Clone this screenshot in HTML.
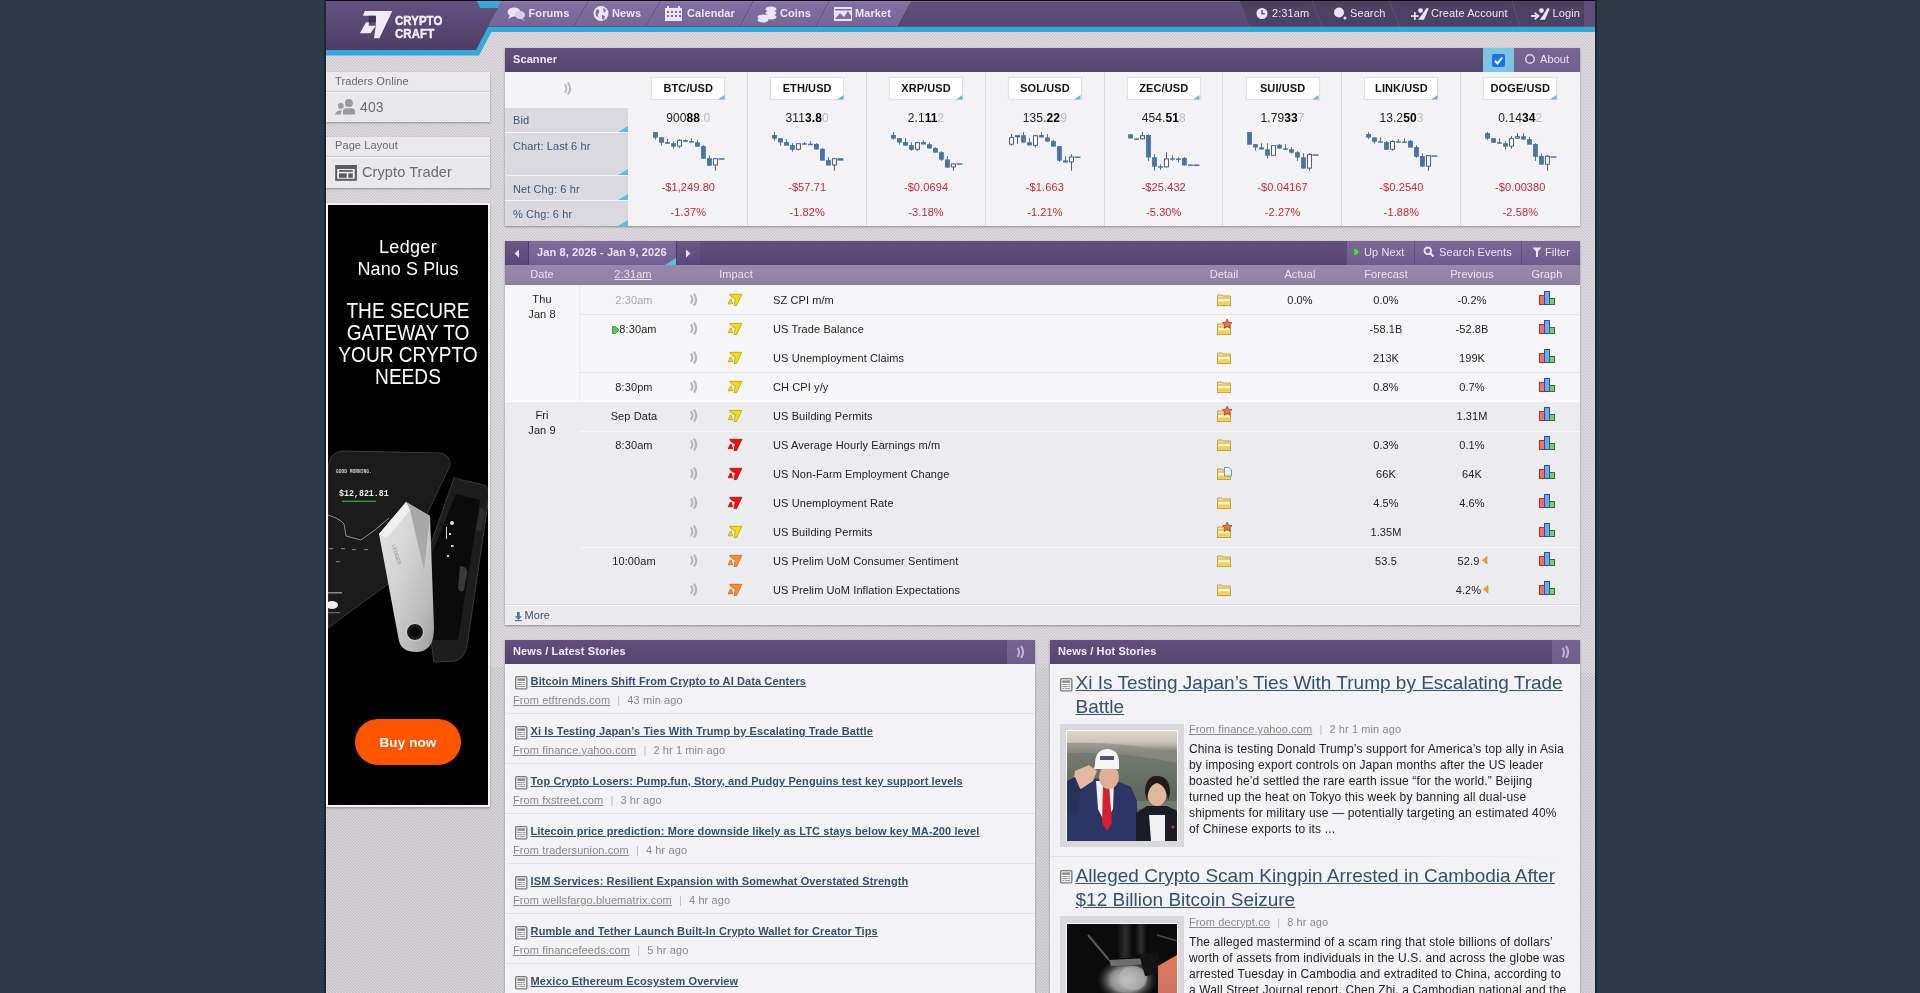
<!DOCTYPE html><html><head><meta charset="utf-8"><title>Crypto Craft</title><style>
html,body{margin:0;padding:0;}
body{width:1920px;height:993px;overflow:hidden;position:relative;background:#2d3849;font-family:'Liberation Sans',sans-serif;}
.t{position:absolute;white-space:nowrap;line-height:normal;letter-spacing:0.1px;font-family:'Liberation Sans',sans-serif;}
.b{position:absolute;}
svg{position:absolute;overflow:visible;}
.hatch{background-color:#d8d6da;background-image:repeating-linear-gradient(45deg,#c6c4c8 0px,#c6c4c8 0.71px,#dddbe0 0.71px,#dddbe0 2.1213px);}
u{text-decoration:underline;}
</style></head><body><div style="position:absolute;left:0;top:0;width:1920px;height:993px;will-change:transform;">

<div class="b" style="left:326px;top:0px;width:1269px;height:993px;background-color:#d8d6da;"></div><div class="b hatch" style="left:326px;top:0;width:1269px;height:993px;"></div>
<div class="b" style="left:324px;top:0px;width:2px;height:993px;background:#1f2633;"></div>
<div class="b" style="left:1595px;top:0px;width:2px;height:993px;background:#1f2633;"></div>
<svg style="left:0;top:0" width="1920" height="60" viewBox="0 0 1920 60">
<defs>
<linearGradient id="gLogo" x1="0" y1="0" x2="0" y2="1"><stop offset="0" stop-color="#64527f"/><stop offset="1" stop-color="#4d3d66"/></linearGradient>
<linearGradient id="gNav" x1="0" y1="0" x2="0" y2="1"><stop offset="0" stop-color="#8270a3"/><stop offset="1" stop-color="#776596"/></linearGradient>
<linearGradient id="gNavD" x1="0" y1="0" x2="0" y2="1"><stop offset="0" stop-color="#614f7c"/><stop offset="1" stop-color="#594873"/></linearGradient>
</defs>
<rect x="326" y="0" width="1269" height="1.2" fill="#08080f"/>
<polygon points="326,1 508,1 479,55.5 326,55.5" fill="#35a9d8"/>
<rect x="480" y="26" width="1115" height="6" fill="#37a8d6"/>
<polygon points="501,1 910.5,1 897,26 489,26" fill="url(#gNav)"/>
<polygon points="910.5,1 1595,1 1595,26 897,26" fill="url(#gNavD)"/>
<rect x="486" y="26" width="1109" height="1" fill="#3e5585" opacity="0.8"/>
<rect x="326" y="1" width="1269" height="1" fill="#ffffff" opacity="0.12"/>
<polygon points="326,1 477,1 480,8 498,8 476,50 326,50" fill="url(#gLogo)"/>
<g stroke="#5e4d7c" stroke-width="1">
<line x1="588.5" y1="1" x2="574.5" y2="26"/><line x1="660.5" y1="1" x2="646.5" y2="26"/>
<line x1="753.5" y1="1" x2="740.5" y2="26"/><line x1="829.5" y1="1" x2="816.5" y2="26"/>
</g>
<g stroke="#8f7eae" stroke-width="1" opacity="0.6">
<line x1="589.5" y1="1" x2="575.5" y2="26"/><line x1="661.5" y1="1" x2="647.5" y2="26"/>
<line x1="754.5" y1="1" x2="741.5" y2="26"/><line x1="830.5" y1="1" x2="817.5" y2="26"/>
</g>
<polygon points="1240,1 1595,1 1595,26 1250,26" fill="#4c4063"/>
<g stroke="#5d5078" stroke-width="1.2" opacity="0.9">
<line x1="1312" y1="1" x2="1322" y2="26"/><line x1="1389" y1="1" x2="1400" y2="26"/><line x1="1512" y1="1" x2="1520" y2="26"/>
</g>
<rect x="1584" y="1" width="11" height="25" fill="#5e4f7a"/>
<!-- logo mark -->
<g fill="#efeaf5">
<polygon points="364.8,10.9 392.3,10.9 379.4,38.3 374,38.3 375.8,25.7 375.8,15.8 363,15.8"/>
<polygon points="366,22.2 368.8,22.2 368.8,25.7 375.8,25.7 370.5,33.2 359.9,33.2"/>
</g>
<g fill="#3d3156"><rect x="368.8" y="15.8" width="7" height="6.4"/></g>
</svg>
<div class="t" style="left:367px;top:25.00px;font-size:0px;"></div>
<div class="t" style="left:394.5px;top:13.36px;font-size:13.5px;font-weight:bold;color:#f3eff8;-webkit-text-stroke:0.45px #f3eff8;transform:scaleX(0.845);transform-origin:left;">CRYPTO</div>
<div class="t" style="left:394.5px;top:25.76px;font-size:13.5px;font-weight:bold;color:#f3eff8;-webkit-text-stroke:0.45px #f3eff8;transform:scaleX(0.85);transform-origin:left;">CRAFT</div>
<div class="t" style="left:528.5px;top:6.86px;font-size:11px;font-weight:bold;color:#ece4f6;">Forums</div>
<div class="t" style="left:612px;top:6.86px;font-size:11px;font-weight:bold;color:#ece4f6;">News</div>
<div class="t" style="left:687px;top:6.86px;font-size:11px;font-weight:bold;color:#ece4f6;">Calendar</div>
<div class="t" style="left:780px;top:6.86px;font-size:11px;font-weight:bold;color:#ece4f6;">Coins</div>
<div class="t" style="left:855px;top:6.86px;font-size:11px;font-weight:bold;color:#ece4f6;">Market</div>
<div class="t" style="left:1272px;top:6.86px;font-size:11px;color:#ece4f6;">2:31am</div>
<div class="t" style="left:1350px;top:6.86px;font-size:11px;color:#ece4f6;">Search</div>
<div class="t" style="left:1431px;top:6.86px;font-size:11px;color:#ece4f6;">Create Account</div>
<div class="t" style="left:1552.5px;top:6.86px;font-size:11px;color:#ece4f6;">Login</div>
<svg style="left:0;top:0" width="1920" height="30">
<g fill="#ece4f6">
<ellipse cx="514" cy="12" rx="6.5" ry="4.5"/><polygon points="510,15 508,19 514,16"/>
<ellipse cx="520" cy="15" rx="5" ry="4" fill="#d9cfe6"/><polygon points="522,18 525,21 519,18" fill="#d9cfe6"/>
<circle cx="601" cy="13.5" r="7.5"/>
<rect x="665" y="8" width="17" height="13"/><rect x="667" y="6" width="2" height="3"/><rect x="678" y="6" width="2" height="3"/>
<ellipse cx="763" cy="17" rx="5.5" ry="2.6"/><ellipse cx="763" cy="20" rx="5.5" ry="2.6"/><ellipse cx="771" cy="9" rx="5.5" ry="2.6"/><ellipse cx="771" cy="13" rx="5.5" ry="2.6"/><ellipse cx="771" cy="17" rx="5.5" ry="2.6"/>
<rect x="834" y="7" width="18" height="14"/>
<circle cx="1262" cy="13.5" r="5.5"/>
<circle cx="1339" cy="12.5" r="5"/><circle cx="1345" cy="18" r="1.5"/>
<polygon points="1426.5,8 1428.8,8.6 1424,19.8 1418,19.8 1422.3,14.3"/><circle cx="1420.5" cy="10.6" r="2.4"/><rect x="1411" y="15.2" width="7.6" height="1.7"/><rect x="1414" y="12.2" width="1.7" height="7.6"/>
<polygon points="1547.5,8 1549.6,8.8 1545,19.8 1539.8,19.8 1543.6,14.5"/><circle cx="1541.4" cy="10.6" r="2.4"/><rect x="1531" y="15" width="6" height="1.9"/><polygon points="1535.3,12 1539.7,16 1535.3,19.9 1534,18.5 1536.8,16 1534,13.4"/>
</g>
<g fill="#7f6d9f">
<path d="M597 9 q3 1 2 4 q-2 1 -1 4 l-2 -1 q-1 -3 0 -5z M603 8 q2 0 3 3 l-2 2 z M602 15 l3 1 -1 4 -2 -1z"/>
<rect x="667" y="11" width="2" height="2"/><rect x="671" y="11" width="2" height="2"/><rect x="675" y="11" width="2" height="2"/><rect x="679" y="11" width="2" height="2"/>
<rect x="667" y="15" width="2" height="2"/><rect x="671" y="15" width="2" height="2"/><rect x="675" y="15" width="2" height="2"/><rect x="679" y="15" width="2" height="2"/>
<polygon points="835,19 840,13 844,17 848,11 851,16 851,19"/><rect x="835" y="9" width="16" height="1.5"/>
</g>
<g fill="#56466f"><rect x="1261.3" y="10" width="1.4" height="4"/><rect x="1261.3" y="13" width="3.5" height="1.4"/></g>
</svg>
<div class="b" style="left:326px;top:72px;width:164px;height:50px;background:#e9e8eb;box-shadow:0 1px 2px rgba(0,0,0,0.35);"></div><div class="b" style="left:326px;top:72px;width:164px;height:19px;background:#eae9ec;"></div><div class="b" style="left:326px;top:91px;width:164px;height:1px;background:#cfcdd2;"></div><div class="b" style="left:326px;top:92px;width:164px;height:1px;background:#f6f6f8;"></div>
<div class="t" style="left:335px;top:74.86px;font-size:11px;color:#6b6b6b;">Traders Online</div>
<div class="t" style="left:360px;top:98.60px;font-size:14px;color:#6b6b6b;">403</div>
<svg style="left:0;top:0" width="600" height="200"><g fill="#9a9a9c">
<circle cx="348.9" cy="102.9" r="3.9"/><path d="M343 114.6 v-2.8 q0 -3.6 3.6 -3.6 h4.8 q3.6 0 3.6 3.6 v2.8z"/>
<circle cx="340.9" cy="105.9" r="2.9"/><path d="M335 114.6 q1.2 -4.4 6.8 -4.4 l-1 4.4z"/>
</g></svg>
<div class="b" style="left:326px;top:137px;width:164px;height:51px;background:#e9e8eb;box-shadow:0 1px 2px rgba(0,0,0,0.35);"></div><div class="b" style="left:326px;top:137px;width:164px;height:19px;background:#eae9ec;"></div><div class="b" style="left:326px;top:156px;width:164px;height:1px;background:#cfcdd2;"></div><div class="b" style="left:326px;top:157px;width:164px;height:1px;background:#f6f6f8;"></div>
<div class="t" style="left:335px;top:139.36px;font-size:11px;color:#6b6b6b;">Page Layout</div>
<div class="t" style="left:362px;top:164.34px;font-size:14.5px;color:#6b6b6b;">Crypto Trader</div>
<svg style="left:0;top:0" width="400" height="200"><rect x="335.2" y="165" width="21.7" height="15.8" fill="#5c5c5e"/><rect x="337.2" y="169" width="17.5" height="9.75" fill="#f2f2f4"/><rect x="339" y="170" width="13.8" height="1.8" fill="#5c5c5e"/><rect x="339" y="173.3" width="7.7" height="4.5" fill="#5c5c5e"/><rect x="348.3" y="173.3" width="4.5" height="4.5" fill="#5c5c5e"/></svg>
<div class="b" style="left:326px;top:203px;width:164px;height:604px;background:#f4f4f4;box-shadow:0 1px 2px rgba(0,0,0,0.3);"></div>
<div class="b" style="left:328px;top:205px;width:160px;height:600px;background:#000;overflow:hidden;"></div>
<div class="t" style="left:258.0px;width:300px;text-align:center;top:237.41px;font-size:18px;color:#fff;letter-spacing:0.35px;">Ledger</div>
<div class="t" style="left:258.0px;width:300px;text-align:center;top:259.41px;font-size:18px;color:#fff;">Nano S Plus</div>
<div class="t" style="left:258.0px;width:300px;text-align:center;top:297.53px;font-size:22px;color:#fff;letter-spacing:0;transform:scaleX(0.868);">THE SECURE</div>
<div class="t" style="left:258.0px;width:300px;text-align:center;top:319.53px;font-size:22px;color:#fff;letter-spacing:0;transform:scaleX(0.868);">GATEWAY TO</div>
<div class="t" style="left:258.0px;width:300px;text-align:center;top:341.53px;font-size:22px;color:#fff;letter-spacing:0;transform:scaleX(0.868);">YOUR CRYPTO</div>
<div class="t" style="left:258.0px;width:300px;text-align:center;top:363.53px;font-size:22px;color:#fff;letter-spacing:0;transform:scaleX(0.868);">NEEDS</div>
<svg style="left:0;top:0" width="600" height="993">
<defs>
<linearGradient id="gSilver" x1="0" y1="0" x2="1" y2="1"><stop offset="0" stop-color="#e8e8e8"/><stop offset="0.45" stop-color="#d2d2d2"/><stop offset="0.8" stop-color="#b8b8b8"/><stop offset="1" stop-color="#9a9a9a"/></linearGradient>
<linearGradient id="gPhone" x1="0" y1="0" x2="1" y2="0"><stop offset="0" stop-color="#1e1e1e"/><stop offset="1" stop-color="#2e2e2e"/></linearGradient>
<clipPath id="adclip"><rect x="328" y="205" width="160" height="600"/></clipPath>
</defs>
<g clip-path="url(#adclip)">
<path d="M328 470 Q329 452 342 451 L440 453 Q451 455 450 466 L396 578 L328 628 z" fill="#1b1b1b" stroke="#3a3a3a" stroke-width="1"/>
<text x="336" y="473" font-size="4.6" fill="#cfcfcf" font-family="Liberation Mono" font-weight="bold">GOOD MORNING.</text>
<text x="339" y="496" font-size="8.3" fill="#ececec" font-family="Liberation Mono" font-weight="bold">$12,821.81</text>
<rect x="342" y="500.5" width="34" height="1.6" fill="#3c8a3c"/>
<polyline points="328,515 336,518 341,521 344,524 346,536 361,540 375,530 389,518" stroke="#bdbdbd" stroke-width="0.7" fill="none"/>
<g fill="#777"><rect x="329" y="548" width="4" height="1.2"/><rect x="341" y="548" width="4" height="1.2"/><rect x="352" y="549" width="4" height="1.2"/><rect x="364" y="549" width="4" height="1.2"/><rect x="336" y="561" width="4" height="1.2"/></g>
<rect x="328" y="592" width="14" height="1.5" fill="#888"/>
<ellipse cx="332" cy="605" rx="6" ry="4" fill="#eee"/>
<rect x="328" y="612" width="12" height="1.2" fill="#666"/>
<path d="M454 478 L484 485 Q490 488 489 496 L467 646 Q465 658 455 661 L434 662 L421 572 z" fill="#1d1d1d" stroke="#3b3b3b" stroke-width="1"/>
<path d="M456 494 L480 500 L458 640 L432 640 L424 574z" fill="#0b0b0b"/>
<g fill="#ddd"><circle cx="452" cy="523" r="2"/><rect x="446" y="527" width="1" height="12"/><rect x="449" y="533" width="2" height="2"/><rect x="451" y="545" width="2.5" height="2"/><rect x="447" y="555" width="2" height="2"/></g>
<path d="M480 508 Q486 508 485 516 L482 530 Q478 534 476 528 z" fill="#2c2c2c"/>
<path d="M460 566 Q468 566 467 574 L464 590 Q460 594 458 588 z" fill="#3a3a3a"/>
<path d="M406 502 L430 516 L434 628 Q434 652 416 652 Q402 652 399 641 L379 534 z" fill="url(#gSilver)"/>
<path d="M406 502 L430 516 L424 570 L410 510z" fill="#a8a8a8"/>
<path d="M379 534 L406 502 L410 510 L387 538z" fill="#f0f0f0"/>
<circle cx="415" cy="632" r="8.5" fill="#1a1a1a" stroke="#d8d8d8" stroke-width="1"/>
<circle cx="415" cy="632" r="5" fill="#000"/>
<text x="392" y="545" font-size="5" fill="#888" font-family="Liberation Sans" transform="rotate(74 392 545)">LEDGER</text>
</g>
</svg>
<div class="b" style="left:355px;top:719px;width:106px;height:45.5px;background:#ff5400;border-radius:23px;"></div>
<div class="t" style="left:258.0px;width:300px;text-align:center;top:734.56px;font-size:13.5px;color:#fff;font-weight:bold;">Buy now</div>
<div class="b" style="left:505px;top:48px;width:1075px;height:178px;background:#f3f3f6;box-shadow:0 1px 2px rgba(0,0,0,0.35);"></div>
<div class="b" style="left:505px;top:48px;width:1075px;height:24px;background:linear-gradient(#634f7e,#55446e);"></div>
<div class="t" style="left:513px;top:52.86px;font-size:11px;font-weight:bold;color:#f2ecf9;">Scanner</div>
<div class="b" style="left:1483px;top:48px;width:31px;height:24px;background:#7fc5e2;"></div>
<div class="b" style="left:1492px;top:54px;width:13px;height:13px;background:#1a73e8;border-radius:2px;"></div>
<svg style="left:1492px;top:54px" width="13" height="13"><polyline points="3,6.8 5.5,9.5 10.2,3.5" fill="none" stroke="#fff" stroke-width="2"/></svg>
<div class="b" style="left:1514px;top:48px;width:66px;height:24px;background:linear-gradient(#776693,#715f8d);"></div>
<svg style="left:1524px;top:53px" width="14" height="14"><circle cx="6" cy="6" r="4.3" fill="none" stroke="#d8cde6" stroke-width="1.6"/><circle cx="6" cy="6" r="2.2" fill="#6f5c8c"/></svg>
<div class="t" style="left:1540px;top:52.86px;font-size:11px;color:#ece4f6;">About</div>
<div class="b" style="left:505px;top:72px;width:123px;height:36px;background:#f4f4f7;"></div>
<div class="b" style="left:505px;top:108px;width:123px;height:24px;background:#dad9df;"></div>
<div class="t" style="left:513px;top:113.96px;font-size:11px;color:#3d5a76;">Bid</div>
<svg style="left:618px;top:126px" width="10" height="6"><polygon points="10,0 10,6 0,6" fill="#5cbde2"/></svg>
<div class="b" style="left:505px;top:133px;width:123px;height:42px;background:#dad9df;"></div>
<div class="t" style="left:513px;top:139.76px;font-size:11px;color:#3d5a76;">Chart: Last 6 hr</div>
<svg style="left:618px;top:169px" width="10" height="6"><polygon points="10,0 10,6 0,6" fill="#5cbde2"/></svg>
<div class="b" style="left:505px;top:176px;width:123px;height:24px;background:#dad9df;"></div>
<div class="t" style="left:513px;top:182.76px;font-size:11px;color:#3d5a76;">Net Chg: 6 hr</div>
<svg style="left:618px;top:194px" width="10" height="6"><polygon points="10,0 10,6 0,6" fill="#5cbde2"/></svg>
<div class="b" style="left:505px;top:201px;width:123px;height:25px;background:#dad9df;"></div>
<div class="t" style="left:513px;top:207.76px;font-size:11px;color:#3d5a76;">% Chg: 6 hr</div>
<svg style="left:618px;top:220px" width="10" height="6"><polygon points="10,0 10,6 0,6" fill="#5cbde2"/></svg>
<svg style="left:562.5px;top:82px" width="14" height="14"><path d="M1.8 2.3 q3.2 4.15 0 8.3" fill="none" stroke="#bcbcc0" stroke-width="2"/><path d="M4.9 0.6 q4.4 6 0 12" fill="none" stroke="#bcbcc0" stroke-width="2.2"/></svg>
<div class="b" style="left:652.3px;top:78px;width:72px;height:21px;background:#fff;box-shadow:0 0 1px 1px rgba(0,0,0,0.08);"></div>
<svg style="left:717.8px;top:94.5px" width="6.5" height="4.5"><polygon points="6.5,0 6.5,4.5 0,4.5" fill="#66b9dc"/></svg>
<div class="t" style="left:538.3px;width:300px;text-align:center;top:81.86px;font-size:11px;font-weight:bold;color:#111;">BTC/USD</div>
<div class="t" style="left:538.3px;width:300px;text-align:center;top:111.24px;font-size:12px;"><span style="color:#222">900</span><b style="color:#000">88</b><span style="color:#bbb">.0</span></div>
<div class="t" style="left:538.3px;width:300px;text-align:center;top:181.06px;font-size:11px;color:#c42a2a;">-$1,249.80</div>
<div class="t" style="left:538.3px;width:300px;text-align:center;top:205.66px;font-size:11px;color:#c42a2a;">-1.37%</div>
<div class="b" style="left:747px;top:72px;width:1px;height:154px;background:#dcdbe0;"></div>
<div class="b" style="left:771.16px;top:78px;width:72px;height:21px;background:#fff;box-shadow:0 0 1px 1px rgba(0,0,0,0.08);"></div>
<svg style="left:836.66px;top:94.5px" width="6.5" height="4.5"><polygon points="6.5,0 6.5,4.5 0,4.5" fill="#66b9dc"/></svg>
<div class="t" style="left:657.16px;width:300px;text-align:center;top:81.86px;font-size:11px;font-weight:bold;color:#111;">ETH/USD</div>
<div class="t" style="left:657.16px;width:300px;text-align:center;top:111.24px;font-size:12px;"><span style="color:#222">311</span><b style="color:#000">3.8</b><span style="color:#bbb">0</span></div>
<div class="t" style="left:657.16px;width:300px;text-align:center;top:181.06px;font-size:11px;color:#c42a2a;">-$57.71</div>
<div class="t" style="left:657.16px;width:300px;text-align:center;top:205.66px;font-size:11px;color:#c42a2a;">-1.82%</div>
<div class="b" style="left:866px;top:72px;width:1px;height:154px;background:#dcdbe0;"></div>
<div class="b" style="left:890.02px;top:78px;width:72px;height:21px;background:#fff;box-shadow:0 0 1px 1px rgba(0,0,0,0.08);"></div>
<svg style="left:955.52px;top:94.5px" width="6.5" height="4.5"><polygon points="6.5,0 6.5,4.5 0,4.5" fill="#66b9dc"/></svg>
<div class="t" style="left:776.02px;width:300px;text-align:center;top:81.86px;font-size:11px;font-weight:bold;color:#111;">XRP/USD</div>
<div class="t" style="left:776.02px;width:300px;text-align:center;top:111.24px;font-size:12px;"><span style="color:#222">2.1</span><b style="color:#000">11</b><span style="color:#bbb">2</span></div>
<div class="t" style="left:776.02px;width:300px;text-align:center;top:181.06px;font-size:11px;color:#c42a2a;">-$0.0694</div>
<div class="t" style="left:776.02px;width:300px;text-align:center;top:205.66px;font-size:11px;color:#c42a2a;">-3.18%</div>
<div class="b" style="left:985px;top:72px;width:1px;height:154px;background:#dcdbe0;"></div>
<div class="b" style="left:1008.8799999999999px;top:78px;width:72px;height:21px;background:#fff;box-shadow:0 0 1px 1px rgba(0,0,0,0.08);"></div>
<svg style="left:1074.3799999999999px;top:94.5px" width="6.5" height="4.5"><polygon points="6.5,0 6.5,4.5 0,4.5" fill="#66b9dc"/></svg>
<div class="t" style="left:894.8799999999999px;width:300px;text-align:center;top:81.86px;font-size:11px;font-weight:bold;color:#111;">SOL/USD</div>
<div class="t" style="left:894.8799999999999px;width:300px;text-align:center;top:111.24px;font-size:12px;"><span style="color:#222">135.</span><b style="color:#000">22</b><span style="color:#bbb">9</span></div>
<div class="t" style="left:894.8799999999999px;width:300px;text-align:center;top:181.06px;font-size:11px;color:#c42a2a;">-$1.663</div>
<div class="t" style="left:894.8799999999999px;width:300px;text-align:center;top:205.66px;font-size:11px;color:#c42a2a;">-1.21%</div>
<div class="b" style="left:1104px;top:72px;width:1px;height:154px;background:#dcdbe0;"></div>
<div class="b" style="left:1127.74px;top:78px;width:72px;height:21px;background:#fff;box-shadow:0 0 1px 1px rgba(0,0,0,0.08);"></div>
<svg style="left:1193.24px;top:94.5px" width="6.5" height="4.5"><polygon points="6.5,0 6.5,4.5 0,4.5" fill="#66b9dc"/></svg>
<div class="t" style="left:1013.74px;width:300px;text-align:center;top:81.86px;font-size:11px;font-weight:bold;color:#111;">ZEC/USD</div>
<div class="t" style="left:1013.74px;width:300px;text-align:center;top:111.24px;font-size:12px;"><span style="color:#222">454.</span><b style="color:#000">51</b><span style="color:#bbb">8</span></div>
<div class="t" style="left:1013.74px;width:300px;text-align:center;top:181.06px;font-size:11px;color:#c42a2a;">-$25.432</div>
<div class="t" style="left:1013.74px;width:300px;text-align:center;top:205.66px;font-size:11px;color:#c42a2a;">-5.30%</div>
<div class="b" style="left:1222px;top:72px;width:1px;height:154px;background:#dcdbe0;"></div>
<div class="b" style="left:1246.6px;top:78px;width:72px;height:21px;background:#fff;box-shadow:0 0 1px 1px rgba(0,0,0,0.08);"></div>
<svg style="left:1312.1px;top:94.5px" width="6.5" height="4.5"><polygon points="6.5,0 6.5,4.5 0,4.5" fill="#66b9dc"/></svg>
<div class="t" style="left:1132.6px;width:300px;text-align:center;top:81.86px;font-size:11px;font-weight:bold;color:#111;">SUI/USD</div>
<div class="t" style="left:1132.6px;width:300px;text-align:center;top:111.24px;font-size:12px;"><span style="color:#222">1.79</span><b style="color:#000">33</b><span style="color:#bbb">7</span></div>
<div class="t" style="left:1132.6px;width:300px;text-align:center;top:181.06px;font-size:11px;color:#c42a2a;">-$0.04167</div>
<div class="t" style="left:1132.6px;width:300px;text-align:center;top:205.66px;font-size:11px;color:#c42a2a;">-2.27%</div>
<div class="b" style="left:1341px;top:72px;width:1px;height:154px;background:#dcdbe0;"></div>
<div class="b" style="left:1365.46px;top:78px;width:72px;height:21px;background:#fff;box-shadow:0 0 1px 1px rgba(0,0,0,0.08);"></div>
<svg style="left:1430.96px;top:94.5px" width="6.5" height="4.5"><polygon points="6.5,0 6.5,4.5 0,4.5" fill="#66b9dc"/></svg>
<div class="t" style="left:1251.46px;width:300px;text-align:center;top:81.86px;font-size:11px;font-weight:bold;color:#111;">LINK/USD</div>
<div class="t" style="left:1251.46px;width:300px;text-align:center;top:111.24px;font-size:12px;"><span style="color:#222">13.2</span><b style="color:#000">50</b><span style="color:#bbb">3</span></div>
<div class="t" style="left:1251.46px;width:300px;text-align:center;top:181.06px;font-size:11px;color:#c42a2a;">-$0.2540</div>
<div class="t" style="left:1251.46px;width:300px;text-align:center;top:205.66px;font-size:11px;color:#c42a2a;">-1.88%</div>
<div class="b" style="left:1460px;top:72px;width:1px;height:154px;background:#dcdbe0;"></div>
<div class="b" style="left:1484.32px;top:78px;width:72px;height:21px;background:#fff;box-shadow:0 0 1px 1px rgba(0,0,0,0.08);"></div>
<svg style="left:1549.82px;top:94.5px" width="6.5" height="4.5"><polygon points="6.5,0 6.5,4.5 0,4.5" fill="#66b9dc"/></svg>
<div class="t" style="left:1370.32px;width:300px;text-align:center;top:81.86px;font-size:11px;font-weight:bold;color:#111;">DOGE/USD</div>
<div class="t" style="left:1370.32px;width:300px;text-align:center;top:111.24px;font-size:12px;"><span style="color:#222">0.14</span><b style="color:#000">34</b><span style="color:#bbb">2</span></div>
<div class="t" style="left:1370.32px;width:300px;text-align:center;top:181.06px;font-size:11px;color:#c42a2a;">-$0.00380</div>
<div class="t" style="left:1370.32px;width:300px;text-align:center;top:205.66px;font-size:11px;color:#c42a2a;">-2.58%</div>
<svg style="left:0;top:0" width="1920" height="200"><line x1="655.49" y1="132.11" x2="655.49" y2="139.60" stroke="#4873a6" stroke-width="1"/><rect x="653.09" y="132.11" width="4.8" height="5.56" fill="#4873a6"/><line x1="661.48" y1="137.18" x2="661.48" y2="145.64" stroke="#4873a6" stroke-width="1"/><rect x="659.08" y="137.18" width="4.8" height="5.56" fill="#4873a6"/><line x1="667.48" y1="139.12" x2="667.48" y2="143.71" stroke="#4873a6" stroke-width="1"/><rect x="665.08" y="142.02" width="4.8" height="1.69" fill="#4873a6"/><line x1="673.47" y1="141.29" x2="673.47" y2="148.78" stroke="#4873a6" stroke-width="1"/><rect x="671.07" y="143.22" width="4.8" height="3.38" fill="#4873a6"/><line x1="679.46" y1="139.12" x2="679.46" y2="147.82" stroke="#4a5a80" stroke-width="1"/><rect x="677.46" y="140.34" width="4" height="5.77" fill="#fff" stroke="#4a5a80" stroke-width="1"/><line x1="685.46" y1="139.12" x2="685.46" y2="141.77" stroke="#4873a6" stroke-width="1"/><rect x="683.06" y="140.08" width="4.8" height="1.69" fill="#4873a6"/><line x1="691.45" y1="138.15" x2="691.45" y2="142.50" stroke="#4873a6" stroke-width="1"/><rect x="689.05" y="141.05" width="4.8" height="1.50" fill="#4873a6"/><line x1="697.44" y1="140.08" x2="697.44" y2="146.61" stroke="#4873a6" stroke-width="1"/><rect x="695.04" y="142.26" width="4.8" height="4.35" fill="#4873a6"/><line x1="703.44" y1="145.16" x2="703.44" y2="158.69" stroke="#4873a6" stroke-width="1"/><rect x="701.04" y="146.12" width="4.8" height="12.57" fill="#4873a6"/><line x1="709.43" y1="155.31" x2="709.43" y2="165.70" stroke="#4873a6" stroke-width="1"/><rect x="707.03" y="158.21" width="4.8" height="7.49" fill="#4873a6"/><line x1="715.42" y1="158.21" x2="715.42" y2="170.77" stroke="#4a5a80" stroke-width="1"/><rect x="713.42" y="158.71" width="4" height="6.25" fill="#fff" stroke="#4a5a80" stroke-width="1"/><rect x="718.42" y="158.21" width="6" height="1.50" fill="#4873a6"/></svg>
<svg style="left:0;top:0" width="1920" height="200"><line x1="774.49" y1="132.11" x2="774.49" y2="140.81" stroke="#4873a6" stroke-width="1"/><rect x="772.09" y="135.01" width="4.8" height="3.62" fill="#4873a6"/><line x1="780.48" y1="138.15" x2="780.48" y2="145.64" stroke="#4873a6" stroke-width="1"/><rect x="778.08" y="138.15" width="4.8" height="4.35" fill="#4873a6"/><line x1="786.48" y1="139.12" x2="786.48" y2="145.64" stroke="#4873a6" stroke-width="1"/><rect x="784.08" y="142.02" width="4.8" height="3.62" fill="#4873a6"/><line x1="792.47" y1="143.22" x2="792.47" y2="151.68" stroke="#4873a6" stroke-width="1"/><rect x="790.07" y="145.16" width="4.8" height="4.59" fill="#4873a6"/><line x1="798.46" y1="143.22" x2="798.46" y2="150.47" stroke="#4a5a80" stroke-width="1"/><rect x="796.46" y="143.72" width="4" height="5.52" fill="#fff" stroke="#4a5a80" stroke-width="1"/><line x1="804.46" y1="142.02" x2="804.46" y2="144.67" stroke="#4873a6" stroke-width="1"/><rect x="802.06" y="143.22" width="4.8" height="1.50" fill="#4873a6"/><line x1="810.45" y1="141.05" x2="810.45" y2="144.67" stroke="#4873a6" stroke-width="1"/><rect x="808.05" y="143.71" width="4.8" height="1.50" fill="#4873a6"/><line x1="816.44" y1="143.22" x2="816.44" y2="149.51" stroke="#4873a6" stroke-width="1"/><rect x="814.04" y="143.95" width="4.8" height="5.56" fill="#4873a6"/><line x1="822.44" y1="148.06" x2="822.44" y2="160.62" stroke="#4873a6" stroke-width="1"/><rect x="820.04" y="148.78" width="4.8" height="11.84" fill="#4873a6"/><line x1="828.43" y1="157.00" x2="828.43" y2="165.46" stroke="#4873a6" stroke-width="1"/><rect x="826.03" y="160.14" width="4.8" height="5.32" fill="#4873a6"/><line x1="834.42" y1="158.21" x2="834.42" y2="170.77" stroke="#4a5a80" stroke-width="1"/><rect x="832.42" y="158.71" width="4" height="6.25" fill="#fff" stroke="#4a5a80" stroke-width="1"/><rect x="837.42" y="158.21" width="6" height="2.42" fill="#4873a6"/></svg>
<svg style="left:0;top:0" width="1920" height="200"><line x1="893.49" y1="132.11" x2="893.49" y2="139.60" stroke="#4873a6" stroke-width="1"/><rect x="891.09" y="135.01" width="4.8" height="3.62" fill="#4873a6"/><line x1="899.48" y1="138.15" x2="899.48" y2="144.67" stroke="#4873a6" stroke-width="1"/><rect x="897.08" y="138.15" width="4.8" height="4.35" fill="#4873a6"/><line x1="905.48" y1="138.15" x2="905.48" y2="145.64" stroke="#4873a6" stroke-width="1"/><rect x="903.08" y="142.02" width="4.8" height="3.62" fill="#4873a6"/><line x1="911.47" y1="142.26" x2="911.47" y2="150.72" stroke="#4873a6" stroke-width="1"/><rect x="909.07" y="145.16" width="4.8" height="4.59" fill="#4873a6"/><line x1="917.46" y1="142.26" x2="917.46" y2="150.72" stroke="#4a5a80" stroke-width="1"/><rect x="915.46" y="142.76" width="4" height="6.49" fill="#fff" stroke="#4a5a80" stroke-width="1"/><line x1="923.46" y1="140.08" x2="923.46" y2="144.43" stroke="#4873a6" stroke-width="1"/><rect x="921.06" y="142.02" width="4.8" height="2.42" fill="#4873a6"/><line x1="929.45" y1="142.26" x2="929.45" y2="148.54" stroke="#4873a6" stroke-width="1"/><rect x="927.05" y="144.19" width="4.8" height="4.35" fill="#4873a6"/><line x1="935.44" y1="147.33" x2="935.44" y2="152.65" stroke="#4873a6" stroke-width="1"/><rect x="933.04" y="148.06" width="4.8" height="4.59" fill="#4873a6"/><line x1="941.44" y1="151.20" x2="941.44" y2="160.87" stroke="#4873a6" stroke-width="1"/><rect x="939.04" y="152.17" width="4.8" height="7.49" fill="#4873a6"/><line x1="947.43" y1="156.27" x2="947.43" y2="167.63" stroke="#4873a6" stroke-width="1"/><rect x="945.03" y="159.42" width="4.8" height="8.22" fill="#4873a6"/><line x1="953.42" y1="163.52" x2="953.42" y2="170.77" stroke="#4a5a80" stroke-width="1"/><rect x="951.42" y="164.02" width="4" height="2.87" fill="#fff" stroke="#4a5a80" stroke-width="1"/><rect x="956.42" y="163.28" width="6" height="1.50" fill="#4873a6"/></svg>
<svg style="left:0;top:0" width="1920" height="200"><line x1="1011.52" y1="134.04" x2="1011.52" y2="145.64" stroke="#4a5a80" stroke-width="1"/><rect x="1009.52" y="137.68" width="4" height="6.49" fill="#fff" stroke="#4a5a80" stroke-width="1"/><line x1="1017.52" y1="135.25" x2="1017.52" y2="143.71" stroke="#4a5a80" stroke-width="1"/><rect x="1015.52" y="135.75" width="4" height="0.93" fill="#fff" stroke="#4a5a80" stroke-width="1"/><line x1="1023.51" y1="132.11" x2="1023.51" y2="142.50" stroke="#4873a6" stroke-width="1"/><rect x="1021.11" y="135.25" width="4.8" height="7.25" fill="#4873a6"/><line x1="1029.50" y1="138.15" x2="1029.50" y2="145.40" stroke="#4873a6" stroke-width="1"/><rect x="1027.10" y="142.26" width="4.8" height="3.14" fill="#4873a6"/><line x1="1035.50" y1="135.25" x2="1035.50" y2="147.57" stroke="#4a5a80" stroke-width="1"/><rect x="1033.50" y="135.75" width="4" height="9.63" fill="#fff" stroke="#4a5a80" stroke-width="1"/><line x1="1041.49" y1="132.11" x2="1041.49" y2="137.42" stroke="#4873a6" stroke-width="1"/><rect x="1039.09" y="135.01" width="4.8" height="2.42" fill="#4873a6"/><line x1="1047.48" y1="134.04" x2="1047.48" y2="141.53" stroke="#4873a6" stroke-width="1"/><rect x="1045.08" y="137.42" width="4.8" height="4.11" fill="#4873a6"/><line x1="1053.48" y1="140.08" x2="1053.48" y2="146.61" stroke="#4873a6" stroke-width="1"/><rect x="1051.08" y="141.05" width="4.8" height="5.56" fill="#4873a6"/><line x1="1059.47" y1="146.12" x2="1059.47" y2="161.83" stroke="#4873a6" stroke-width="1"/><rect x="1057.07" y="146.12" width="4.8" height="14.50" fill="#4873a6"/><line x1="1065.46" y1="156.27" x2="1065.46" y2="162.56" stroke="#4873a6" stroke-width="1"/><rect x="1063.06" y="160.38" width="4.8" height="2.17" fill="#4873a6"/><line x1="1071.46" y1="154.10" x2="1071.46" y2="170.77" stroke="#4a5a80" stroke-width="1"/><rect x="1069.46" y="157.02" width="4" height="4.80" fill="#fff" stroke="#4a5a80" stroke-width="1"/><rect x="1074.45" y="156.52" width="6" height="1.50" fill="#4873a6"/></svg>
<svg style="left:0;top:0" width="1920" height="200"><line x1="1130.52" y1="134.28" x2="1130.52" y2="138.39" stroke="#4873a6" stroke-width="1"/><rect x="1128.12" y="134.28" width="4.8" height="4.11" fill="#4873a6"/><line x1="1136.52" y1="138.39" x2="1136.52" y2="139.60" stroke="#4873a6" stroke-width="1"/><rect x="1134.12" y="138.39" width="4.8" height="1.50" fill="#4873a6"/><line x1="1142.51" y1="132.11" x2="1142.51" y2="139.36" stroke="#4a5a80" stroke-width="1"/><rect x="1140.51" y="135.75" width="4" height="3.11" fill="#fff" stroke="#4a5a80" stroke-width="1"/><line x1="1148.50" y1="134.28" x2="1148.50" y2="160.87" stroke="#4873a6" stroke-width="1"/><rect x="1146.10" y="135.01" width="4.8" height="22.47" fill="#4873a6"/><line x1="1154.50" y1="154.34" x2="1154.50" y2="170.77" stroke="#4873a6" stroke-width="1"/><rect x="1152.10" y="157.24" width="4.8" height="9.42" fill="#4873a6"/><line x1="1160.49" y1="164.25" x2="1160.49" y2="169.81" stroke="#4873a6" stroke-width="1"/><rect x="1158.09" y="166.18" width="4.8" height="1.50" fill="#4873a6"/><line x1="1166.48" y1="152.17" x2="1166.48" y2="167.39" stroke="#4a5a80" stroke-width="1"/><rect x="1164.48" y="158.95" width="4" height="7.94" fill="#fff" stroke="#4a5a80" stroke-width="1"/><line x1="1172.48" y1="155.31" x2="1172.48" y2="160.87" stroke="#4873a6" stroke-width="1"/><rect x="1170.08" y="158.21" width="4.8" height="1.50" fill="#4873a6"/><line x1="1178.47" y1="157.24" x2="1178.47" y2="162.56" stroke="#4873a6" stroke-width="1"/><rect x="1176.07" y="158.45" width="4.8" height="1.50" fill="#4873a6"/><line x1="1184.46" y1="157.00" x2="1184.46" y2="165.46" stroke="#4873a6" stroke-width="1"/><rect x="1182.06" y="157.97" width="4.8" height="7.49" fill="#4873a6"/><line x1="1190.46" y1="164.49" x2="1190.46" y2="165.70" stroke="#4873a6" stroke-width="1"/><rect x="1188.06" y="164.49" width="4.8" height="1.50" fill="#4873a6"/><rect x="1193.45" y="164.49" width="6" height="1.50" fill="#4873a6"/></svg>
<svg style="left:0;top:0" width="1920" height="200"><line x1="1249.52" y1="132.11" x2="1249.52" y2="144.67" stroke="#4873a6" stroke-width="1"/><rect x="1247.12" y="132.11" width="4.8" height="12.57" fill="#4873a6"/><line x1="1255.52" y1="144.19" x2="1255.52" y2="150.72" stroke="#4873a6" stroke-width="1"/><rect x="1253.12" y="144.19" width="4.8" height="3.38" fill="#4873a6"/><line x1="1261.51" y1="143.22" x2="1261.51" y2="149.51" stroke="#4873a6" stroke-width="1"/><rect x="1259.11" y="147.33" width="4.8" height="2.17" fill="#4873a6"/><line x1="1267.50" y1="143.22" x2="1267.50" y2="158.69" stroke="#4873a6" stroke-width="1"/><rect x="1265.10" y="149.27" width="4.8" height="6.52" fill="#4873a6"/><line x1="1273.50" y1="145.16" x2="1273.50" y2="155.79" stroke="#4a5a80" stroke-width="1"/><rect x="1271.50" y="145.66" width="4" height="9.63" fill="#fff" stroke="#4a5a80" stroke-width="1"/><line x1="1279.49" y1="144.19" x2="1279.49" y2="148.54" stroke="#4873a6" stroke-width="1"/><rect x="1277.09" y="144.67" width="4.8" height="3.87" fill="#4873a6"/><line x1="1285.48" y1="144.19" x2="1285.48" y2="149.51" stroke="#4873a6" stroke-width="1"/><rect x="1283.08" y="148.30" width="4.8" height="1.50" fill="#4873a6"/><line x1="1291.48" y1="147.09" x2="1291.48" y2="153.62" stroke="#4873a6" stroke-width="1"/><rect x="1289.08" y="149.27" width="4.8" height="3.38" fill="#4873a6"/><line x1="1297.47" y1="151.20" x2="1297.47" y2="160.87" stroke="#4873a6" stroke-width="1"/><rect x="1295.07" y="152.17" width="4.8" height="5.32" fill="#4873a6"/><line x1="1303.46" y1="153.13" x2="1303.46" y2="168.60" stroke="#4873a6" stroke-width="1"/><rect x="1301.06" y="157.24" width="4.8" height="11.36" fill="#4873a6"/><line x1="1309.46" y1="153.13" x2="1309.46" y2="170.77" stroke="#4a5a80" stroke-width="1"/><rect x="1307.46" y="154.60" width="4" height="13.50" fill="#fff" stroke="#4a5a80" stroke-width="1"/><rect x="1312.45" y="154.34" width="6" height="1.50" fill="#4873a6"/></svg>
<svg style="left:0;top:0" width="1920" height="200"><line x1="1368.52" y1="132.11" x2="1368.52" y2="138.87" stroke="#4873a6" stroke-width="1"/><rect x="1366.12" y="134.04" width="4.8" height="3.62" fill="#4873a6"/><line x1="1374.52" y1="137.42" x2="1374.52" y2="143.71" stroke="#4873a6" stroke-width="1"/><rect x="1372.12" y="137.42" width="4.8" height="4.35" fill="#4873a6"/><line x1="1380.51" y1="137.18" x2="1380.51" y2="142.74" stroke="#4873a6" stroke-width="1"/><rect x="1378.11" y="141.29" width="4.8" height="1.50" fill="#4873a6"/><line x1="1386.50" y1="141.05" x2="1386.50" y2="149.75" stroke="#4873a6" stroke-width="1"/><rect x="1384.10" y="142.02" width="4.8" height="7.73" fill="#4873a6"/><line x1="1392.50" y1="140.08" x2="1392.50" y2="150.72" stroke="#4a5a80" stroke-width="1"/><rect x="1390.50" y="141.55" width="4" height="7.70" fill="#fff" stroke="#4a5a80" stroke-width="1"/><line x1="1398.49" y1="139.12" x2="1398.49" y2="142.74" stroke="#4873a6" stroke-width="1"/><rect x="1396.09" y="141.29" width="4.8" height="1.50" fill="#4873a6"/><line x1="1404.48" y1="138.15" x2="1404.48" y2="142.74" stroke="#4873a6" stroke-width="1"/><rect x="1402.08" y="141.53" width="4.8" height="1.50" fill="#4873a6"/><line x1="1410.48" y1="140.08" x2="1410.48" y2="147.57" stroke="#4873a6" stroke-width="1"/><rect x="1408.08" y="140.81" width="4.8" height="6.77" fill="#4873a6"/><line x1="1416.47" y1="145.16" x2="1416.47" y2="157.72" stroke="#4873a6" stroke-width="1"/><rect x="1414.07" y="147.09" width="4.8" height="9.67" fill="#4873a6"/><line x1="1422.46" y1="153.13" x2="1422.46" y2="166.67" stroke="#4873a6" stroke-width="1"/><rect x="1420.06" y="156.03" width="4.8" height="10.63" fill="#4873a6"/><line x1="1428.46" y1="155.07" x2="1428.46" y2="170.77" stroke="#4a5a80" stroke-width="1"/><rect x="1426.46" y="155.57" width="4" height="10.60" fill="#fff" stroke="#4a5a80" stroke-width="1"/><rect x="1431.45" y="155.31" width="6" height="1.50" fill="#4873a6"/></svg>
<svg style="left:0;top:0" width="1920" height="200"><line x1="1487.52" y1="132.11" x2="1487.52" y2="139.84" stroke="#4873a6" stroke-width="1"/><rect x="1485.12" y="133.07" width="4.8" height="5.56" fill="#4873a6"/><line x1="1493.52" y1="138.15" x2="1493.52" y2="142.74" stroke="#4873a6" stroke-width="1"/><rect x="1491.12" y="138.15" width="4.8" height="4.59" fill="#4873a6"/><line x1="1499.51" y1="138.15" x2="1499.51" y2="143.71" stroke="#4873a6" stroke-width="1"/><rect x="1497.11" y="142.26" width="4.8" height="1.50" fill="#4873a6"/><line x1="1505.50" y1="141.05" x2="1505.50" y2="149.75" stroke="#4873a6" stroke-width="1"/><rect x="1503.10" y="143.22" width="4.8" height="3.38" fill="#4873a6"/><line x1="1511.50" y1="135.97" x2="1511.50" y2="148.78" stroke="#4a5a80" stroke-width="1"/><rect x="1509.50" y="138.65" width="4" height="7.46" fill="#fff" stroke="#4a5a80" stroke-width="1"/><line x1="1517.49" y1="133.07" x2="1517.49" y2="138.63" stroke="#4a5a80" stroke-width="1"/><rect x="1515.49" y="136.72" width="4" height="1.42" fill="#fff" stroke="#4a5a80" stroke-width="1"/><line x1="1523.48" y1="133.07" x2="1523.48" y2="139.60" stroke="#4873a6" stroke-width="1"/><rect x="1521.08" y="136.22" width="4.8" height="3.38" fill="#4873a6"/><line x1="1529.48" y1="137.18" x2="1529.48" y2="144.67" stroke="#4873a6" stroke-width="1"/><rect x="1527.08" y="139.12" width="4.8" height="5.56" fill="#4873a6"/><line x1="1535.47" y1="143.22" x2="1535.47" y2="160.87" stroke="#4873a6" stroke-width="1"/><rect x="1533.07" y="143.95" width="4.8" height="12.81" fill="#4873a6"/><line x1="1541.46" y1="153.13" x2="1541.46" y2="164.73" stroke="#4873a6" stroke-width="1"/><rect x="1539.06" y="156.03" width="4.8" height="8.70" fill="#4873a6"/><line x1="1547.46" y1="155.07" x2="1547.46" y2="170.77" stroke="#4a5a80" stroke-width="1"/><rect x="1545.46" y="156.29" width="4" height="7.94" fill="#fff" stroke="#4a5a80" stroke-width="1"/><rect x="1550.45" y="156.27" width="6" height="1.50" fill="#4873a6"/></svg>
<div class="b" style="left:505px;top:241px;width:1075px;height:384px;background:#f3f3f6;box-shadow:0 1px 2px rgba(0,0,0,0.35);"></div>
<div class="b" style="left:505px;top:241px;width:1075px;height:24px;background:linear-gradient(#634f7e,#55446e);"></div>
<div class="b" style="left:505px;top:241px;width:23px;height:24px;background:linear-gradient(#6a5886,#58487a);"></div>
<div class="b" style="left:528px;top:241px;width:1px;height:24px;background:#4a3b62;"></div>
<div class="b" style="left:529px;top:241px;width:147px;height:24px;background:linear-gradient(#7f6c9d,#735f91);"></div>
<svg style="left:665px;top:258px" width="11" height="7"><polygon points="11,0 11,7 0,7" fill="#5cbde2"/></svg>
<div class="b" style="left:676px;top:241px;width:1px;height:24px;background:#4a3b62;"></div>
<div class="b" style="left:677px;top:241px;width:23px;height:24px;background:linear-gradient(#6a5886,#58487a);"></div>
<svg style="left:505px;top:241.5px" width="200" height="23"><polygon points="14,7.5 14,15.5 9.5,11.5" fill="#ece4f6"/><polygon points="181,7.5 181,15.5 185.5,11.5" fill="#ece4f6"/></svg>
<div class="t" style="left:537px;top:245.86px;font-size:11px;font-weight:bold;color:#ece4f6;">Jan 8, 2026 - Jan 9, 2026</div>
<div class="b" style="left:1346px;top:241px;width:68px;height:24px;background:linear-gradient(#7a6898,#6f5c8c);"></div>
<div class="b" style="left:1346px;top:241px;width:1px;height:24px;background:#5d4c79;"></div>
<div class="b" style="left:1414px;top:241px;width:107px;height:24px;background:linear-gradient(#7a6898,#6f5c8c);"></div>
<div class="b" style="left:1414px;top:241px;width:1px;height:24px;background:#5d4c79;"></div>
<div class="b" style="left:1521px;top:241px;width:59px;height:24px;background:linear-gradient(#7a6898,#6f5c8c);"></div>
<div class="b" style="left:1521px;top:241px;width:1px;height:24px;background:#5d4c79;"></div>
<div class="t" style="left:1364px;top:245.86px;font-size:11px;color:#ece4f6;">Up Next</div>
<svg style="left:1353px;top:248px" width="8" height="10"><polygon points="0.6,0.6 3.4,0.6 6.6,4 3.4,7.4 0.6,7.4" fill="#62c862" stroke="#2f8f2f" stroke-width="0.8" stroke-linejoin="round"/></svg>
<div class="t" style="left:1439px;top:245.86px;font-size:11px;color:#ece4f6;">Search Events</div>
<svg style="left:1423px;top:246px" width="12" height="12"><circle cx="4.8" cy="4.8" r="3.3" fill="none" stroke="#ece4f6" stroke-width="1.8"/><line x1="7" y1="7" x2="10.5" y2="10.5" stroke="#ece4f6" stroke-width="2.2"/></svg>
<div class="t" style="left:1545px;top:246.36px;font-size:11px;color:#ece4f6;">Filter</div>
<svg style="left:1532px;top:247px" width="12" height="11"><polygon points="0.5,0.5 9.5,0.5 6,4.5 6,10 4,10 4,4.5" fill="#ece4f6"/></svg>
<div class="b" style="left:505px;top:265px;width:1075px;height:20px;background:linear-gradient(#9787a8,#9181a2);"></div>
<div class="b" style="left:505px;top:284px;width:1075px;height:1px;background:#8a7a98;"></div>
<div class="t" style="left:392.0px;width:300px;text-align:center;top:267.86px;font-size:11px;color:#e9e1f2;">Date</div>
<div class="t" style="left:483.0px;width:300px;text-align:center;top:267.86px;font-size:11px;color:#e9e1f2;"><u>2:31am</u></div>
<div class="t" style="left:586.0px;width:300px;text-align:center;top:267.86px;font-size:11px;color:#e9e1f2;">Impact</div>
<div class="t" style="left:1074.0px;width:300px;text-align:center;top:267.86px;font-size:11px;color:#e9e1f2;">Detail</div>
<div class="t" style="left:1150.0px;width:300px;text-align:center;top:267.86px;font-size:11px;color:#e9e1f2;">Actual</div>
<div class="t" style="left:1236.0px;width:300px;text-align:center;top:267.86px;font-size:11px;color:#e9e1f2;">Forecast</div>
<div class="t" style="left:1322.0px;width:300px;text-align:center;top:267.86px;font-size:11px;color:#e9e1f2;">Previous</div>
<div class="t" style="left:1397.0px;width:300px;text-align:center;top:267.86px;font-size:11px;color:#e9e1f2;">Graph</div>
<div class="b" style="left:505px;top:285px;width:1075px;height:117px;background:#f6f6f9;"></div>
<div class="b" style="left:505px;top:402px;width:1075px;height:203px;background:#ececef;"></div>
<div class="b" style="left:579px;top:285px;width:1px;height:320px;background:#ebebef;"></div>
<div class="b" style="left:580px;top:314px;width:1000px;height:1px;background:#e4e4e8;"></div>
<div class="b" style="left:580px;top:372px;width:1000px;height:1px;background:#e4e4e8;"></div>
<div class="b" style="left:580px;top:431px;width:1000px;height:1px;background:#f7f7f9;"></div>
<div class="b" style="left:580px;top:547px;width:1000px;height:1px;background:#f7f7f9;"></div>
<div class="b" style="left:505px;top:401px;width:1075px;height:1px;background:#fbfbfd;"></div>
<div class="b" style="left:505px;top:605px;width:1075px;height:20px;background:#ebebee;"></div>
<div class="b" style="left:505px;top:604px;width:1075px;height:1px;background:#dedee2;"></div>
<div class="b" style="left:505px;top:605px;width:1075px;height:1px;background:#f6f6f8;"></div>
<div class="t" style="left:392.0px;width:300px;text-align:center;top:292.86px;font-size:11px;color:#222;">Thu</div>
<div class="t" style="left:392.0px;width:300px;text-align:center;top:307.86px;font-size:11px;color:#222;">Jan 8</div>
<div class="t" style="left:392.0px;width:300px;text-align:center;top:408.86px;font-size:11px;color:#222;">Fri</div>
<div class="t" style="left:392.0px;width:300px;text-align:center;top:423.86px;font-size:11px;color:#222;">Jan 9</div>
<div class="t" style="left:484.0px;width:300px;text-align:center;top:293.86px;font-size:11px;color:#a8a8a8;">2:30am</div>
<svg style="left:689px;top:293px" width="10" height="14"><path d="M1.8 2.3 q3.2 4.15 0 8.3" fill="none" stroke="#b6b6ba" stroke-width="2"/><path d="M4.9 0.6 q4.4 6 0 12" fill="none" stroke="#b6b6ba" stroke-width="2.2"/></svg>
<svg style="left:728px;top:293.8px" width="16" height="13"><polygon points="1.85,0.3 13.9,0.3 8.6,11.6 6.0,11.6 7.3,4.7 4.4,3.7 1.85,1.3" fill="#f2dc10" stroke="#a89a10" stroke-width="0.7" stroke-linejoin="round"/><polygon points="0.2,9.8 2.3,5.2 3.3,5.2 4.6,9.8" fill="#f2dc10" stroke="#a89a10" stroke-width="0.7" stroke-linejoin="round"/></svg>
<div class="t" style="left:773px;top:293.86px;font-size:11px;color:#222;">SZ CPI m/m</div>
<svg style="left:1216px;top:290px" width="18" height="18"><path d="M1.5 7.5 v-2.5 h4.5 l1 1 h7.5 v1.5" fill="#f4e2a0" stroke="#c9a040" stroke-width="1"/><rect x="1.5" y="8" width="13" height="7.5" fill="#f6dc7a" stroke="#c9a040" stroke-width="1"/><rect x="2.5" y="8.8" width="11" height="2.6" fill="#fff7d0"/><rect x="2.5" y="11.4" width="11" height="3.3" fill="#f2cf58"/></svg>
<div class="t" style="left:1150.0px;width:300px;text-align:center;top:293.86px;font-size:11px;color:#222;">0.0%</div>
<div class="t" style="left:1236.0px;width:300px;text-align:center;top:293.86px;font-size:11px;color:#222;">0.0%</div>
<div class="t" style="left:1322.0px;width:300px;text-align:center;top:293.86px;font-size:11px;color:#222;">-0.2%</div>
<svg style="left:1539px;top:291px" width="17" height="15"><rect x="0.5" y="4.5" width="5" height="9" fill="#f07070" stroke="#b03030"/><rect x="5.5" y="0.5" width="5" height="13" fill="#70a8f0" stroke="#2050b0"/><rect x="10.5" y="7.5" width="5" height="6" fill="#80c880" stroke="#307030"/></svg>
<div class="t" style="left:488.0px;width:300px;text-align:center;top:322.86px;font-size:11px;color:#222;">8:30am</div>
<svg style="left:689px;top:322px" width="10" height="14"><path d="M1.8 2.3 q3.2 4.15 0 8.3" fill="none" stroke="#b6b6ba" stroke-width="2"/><path d="M4.9 0.6 q4.4 6 0 12" fill="none" stroke="#b6b6ba" stroke-width="2.2"/></svg>
<svg style="left:728px;top:322.8px" width="16" height="13"><polygon points="1.85,0.3 13.9,0.3 8.6,11.6 6.0,11.6 7.3,4.7 4.4,3.7 1.85,1.3" fill="#f2dc10" stroke="#a89a10" stroke-width="0.7" stroke-linejoin="round"/><polygon points="0.2,9.8 2.3,5.2 3.3,5.2 4.6,9.8" fill="#f2dc10" stroke="#a89a10" stroke-width="0.7" stroke-linejoin="round"/></svg>
<div class="t" style="left:773px;top:322.86px;font-size:11px;color:#222;">US Trade Balance</div>
<svg style="left:1216px;top:319px" width="18" height="18"><path d="M1.5 7.5 v-2.5 h4.5 l1 1 h7.5 v1.5" fill="#f4e2a0" stroke="#c9a040" stroke-width="1"/><rect x="1.5" y="8" width="13" height="7.5" fill="#f6dc7a" stroke="#c9a040" stroke-width="1"/><rect x="2.5" y="8.8" width="11" height="2.6" fill="#fff7d0"/><rect x="2.5" y="11.4" width="11" height="3.3" fill="#f2cf58"/><polygon points="11.20,0.20 12.55,3.34 15.96,3.65 13.39,5.91 14.14,9.25 11.20,7.50 8.26,9.25 9.01,5.91 6.44,3.65 9.85,3.34" fill="#f07a3a" stroke="#a83a18" stroke-width="0.8" stroke-linejoin="round"/></svg>
<div class="t" style="left:1236.0px;width:300px;text-align:center;top:322.86px;font-size:11px;color:#222;">-58.1B</div>
<div class="t" style="left:1322.0px;width:300px;text-align:center;top:322.86px;font-size:11px;color:#222;">-52.8B</div>
<svg style="left:1539px;top:320px" width="17" height="15"><rect x="0.5" y="4.5" width="5" height="9" fill="#f07070" stroke="#b03030"/><rect x="5.5" y="0.5" width="5" height="13" fill="#70a8f0" stroke="#2050b0"/><rect x="10.5" y="7.5" width="5" height="6" fill="#80c880" stroke="#307030"/></svg>
<svg style="left:689px;top:351px" width="10" height="14"><path d="M1.8 2.3 q3.2 4.15 0 8.3" fill="none" stroke="#b6b6ba" stroke-width="2"/><path d="M4.9 0.6 q4.4 6 0 12" fill="none" stroke="#b6b6ba" stroke-width="2.2"/></svg>
<svg style="left:728px;top:351.8px" width="16" height="13"><polygon points="1.85,0.3 13.9,0.3 8.6,11.6 6.0,11.6 7.3,4.7 4.4,3.7 1.85,1.3" fill="#f2dc10" stroke="#a89a10" stroke-width="0.7" stroke-linejoin="round"/><polygon points="0.2,9.8 2.3,5.2 3.3,5.2 4.6,9.8" fill="#f2dc10" stroke="#a89a10" stroke-width="0.7" stroke-linejoin="round"/></svg>
<div class="t" style="left:773px;top:351.86px;font-size:11px;color:#222;">US Unemployment Claims</div>
<svg style="left:1216px;top:348px" width="18" height="18"><path d="M1.5 7.5 v-2.5 h4.5 l1 1 h7.5 v1.5" fill="#f4e2a0" stroke="#c9a040" stroke-width="1"/><rect x="1.5" y="8" width="13" height="7.5" fill="#f6dc7a" stroke="#c9a040" stroke-width="1"/><rect x="2.5" y="8.8" width="11" height="2.6" fill="#fff7d0"/><rect x="2.5" y="11.4" width="11" height="3.3" fill="#f2cf58"/></svg>
<div class="t" style="left:1236.0px;width:300px;text-align:center;top:351.86px;font-size:11px;color:#222;">213K</div>
<div class="t" style="left:1322.0px;width:300px;text-align:center;top:351.86px;font-size:11px;color:#222;">199K</div>
<svg style="left:1539px;top:349px" width="17" height="15"><rect x="0.5" y="4.5" width="5" height="9" fill="#f07070" stroke="#b03030"/><rect x="5.5" y="0.5" width="5" height="13" fill="#70a8f0" stroke="#2050b0"/><rect x="10.5" y="7.5" width="5" height="6" fill="#80c880" stroke="#307030"/></svg>
<div class="t" style="left:484.0px;width:300px;text-align:center;top:380.86px;font-size:11px;color:#222;">8:30pm</div>
<svg style="left:689px;top:380px" width="10" height="14"><path d="M1.8 2.3 q3.2 4.15 0 8.3" fill="none" stroke="#b6b6ba" stroke-width="2"/><path d="M4.9 0.6 q4.4 6 0 12" fill="none" stroke="#b6b6ba" stroke-width="2.2"/></svg>
<svg style="left:728px;top:380.8px" width="16" height="13"><polygon points="1.85,0.3 13.9,0.3 8.6,11.6 6.0,11.6 7.3,4.7 4.4,3.7 1.85,1.3" fill="#f2dc10" stroke="#a89a10" stroke-width="0.7" stroke-linejoin="round"/><polygon points="0.2,9.8 2.3,5.2 3.3,5.2 4.6,9.8" fill="#f2dc10" stroke="#a89a10" stroke-width="0.7" stroke-linejoin="round"/></svg>
<div class="t" style="left:773px;top:380.86px;font-size:11px;color:#222;">CH CPI y/y</div>
<svg style="left:1216px;top:377px" width="18" height="18"><path d="M1.5 7.5 v-2.5 h4.5 l1 1 h7.5 v1.5" fill="#f4e2a0" stroke="#c9a040" stroke-width="1"/><rect x="1.5" y="8" width="13" height="7.5" fill="#f6dc7a" stroke="#c9a040" stroke-width="1"/><rect x="2.5" y="8.8" width="11" height="2.6" fill="#fff7d0"/><rect x="2.5" y="11.4" width="11" height="3.3" fill="#f2cf58"/></svg>
<div class="t" style="left:1236.0px;width:300px;text-align:center;top:380.86px;font-size:11px;color:#222;">0.8%</div>
<div class="t" style="left:1322.0px;width:300px;text-align:center;top:380.86px;font-size:11px;color:#222;">0.7%</div>
<svg style="left:1539px;top:378px" width="17" height="15"><rect x="0.5" y="4.5" width="5" height="9" fill="#f07070" stroke="#b03030"/><rect x="5.5" y="0.5" width="5" height="13" fill="#70a8f0" stroke="#2050b0"/><rect x="10.5" y="7.5" width="5" height="6" fill="#80c880" stroke="#307030"/></svg>
<div class="t" style="left:484.0px;width:300px;text-align:center;top:409.86px;font-size:11px;color:#222;">Sep Data</div>
<svg style="left:689px;top:409px" width="10" height="14"><path d="M1.8 2.3 q3.2 4.15 0 8.3" fill="none" stroke="#b6b6ba" stroke-width="2"/><path d="M4.9 0.6 q4.4 6 0 12" fill="none" stroke="#b6b6ba" stroke-width="2.2"/></svg>
<svg style="left:728px;top:409.8px" width="16" height="13"><polygon points="1.85,0.3 13.9,0.3 8.6,11.6 6.0,11.6 7.3,4.7 4.4,3.7 1.85,1.3" fill="#f2dc10" stroke="#a89a10" stroke-width="0.7" stroke-linejoin="round"/><polygon points="0.2,9.8 2.3,5.2 3.3,5.2 4.6,9.8" fill="#f2dc10" stroke="#a89a10" stroke-width="0.7" stroke-linejoin="round"/></svg>
<div class="t" style="left:773px;top:409.86px;font-size:11px;color:#222;">US Building Permits</div>
<svg style="left:1216px;top:406px" width="18" height="18"><path d="M1.5 7.5 v-2.5 h4.5 l1 1 h7.5 v1.5" fill="#f4e2a0" stroke="#c9a040" stroke-width="1"/><rect x="1.5" y="8" width="13" height="7.5" fill="#f6dc7a" stroke="#c9a040" stroke-width="1"/><rect x="2.5" y="8.8" width="11" height="2.6" fill="#fff7d0"/><rect x="2.5" y="11.4" width="11" height="3.3" fill="#f2cf58"/><polygon points="11.20,0.20 12.55,3.34 15.96,3.65 13.39,5.91 14.14,9.25 11.20,7.50 8.26,9.25 9.01,5.91 6.44,3.65 9.85,3.34" fill="#f07a3a" stroke="#a83a18" stroke-width="0.8" stroke-linejoin="round"/></svg>
<div class="t" style="left:1322.0px;width:300px;text-align:center;top:409.86px;font-size:11px;color:#222;">1.31M</div>
<svg style="left:1539px;top:407px" width="17" height="15"><rect x="0.5" y="4.5" width="5" height="9" fill="#f07070" stroke="#b03030"/><rect x="5.5" y="0.5" width="5" height="13" fill="#70a8f0" stroke="#2050b0"/><rect x="10.5" y="7.5" width="5" height="6" fill="#80c880" stroke="#307030"/></svg>
<div class="t" style="left:484.0px;width:300px;text-align:center;top:438.86px;font-size:11px;color:#222;">8:30am</div>
<svg style="left:689px;top:438px" width="10" height="14"><path d="M1.8 2.3 q3.2 4.15 0 8.3" fill="none" stroke="#b6b6ba" stroke-width="2"/><path d="M4.9 0.6 q4.4 6 0 12" fill="none" stroke="#b6b6ba" stroke-width="2.2"/></svg>
<svg style="left:728px;top:438.8px" width="16" height="13"><polygon points="1.85,0.3 13.9,0.3 8.6,11.6 6.0,11.6 7.3,4.7 4.4,3.7 1.85,1.3" fill="#f01010" stroke="#9a0808" stroke-width="0.7" stroke-linejoin="round"/><polygon points="0.2,9.8 2.3,5.2 3.3,5.2 4.6,9.8" fill="#f01010" stroke="#9a0808" stroke-width="0.7" stroke-linejoin="round"/></svg>
<div class="t" style="left:773px;top:438.86px;font-size:11px;color:#222;">US Average Hourly Earnings m/m</div>
<svg style="left:1216px;top:435px" width="18" height="18"><path d="M1.5 7.5 v-2.5 h4.5 l1 1 h7.5 v1.5" fill="#f4e2a0" stroke="#c9a040" stroke-width="1"/><rect x="1.5" y="8" width="13" height="7.5" fill="#f6dc7a" stroke="#c9a040" stroke-width="1"/><rect x="2.5" y="8.8" width="11" height="2.6" fill="#fff7d0"/><rect x="2.5" y="11.4" width="11" height="3.3" fill="#f2cf58"/></svg>
<div class="t" style="left:1236.0px;width:300px;text-align:center;top:438.86px;font-size:11px;color:#222;">0.3%</div>
<div class="t" style="left:1322.0px;width:300px;text-align:center;top:438.86px;font-size:11px;color:#222;">0.1%</div>
<svg style="left:1539px;top:436px" width="17" height="15"><rect x="0.5" y="4.5" width="5" height="9" fill="#f07070" stroke="#b03030"/><rect x="5.5" y="0.5" width="5" height="13" fill="#70a8f0" stroke="#2050b0"/><rect x="10.5" y="7.5" width="5" height="6" fill="#80c880" stroke="#307030"/></svg>
<svg style="left:689px;top:467px" width="10" height="14"><path d="M1.8 2.3 q3.2 4.15 0 8.3" fill="none" stroke="#b6b6ba" stroke-width="2"/><path d="M4.9 0.6 q4.4 6 0 12" fill="none" stroke="#b6b6ba" stroke-width="2.2"/></svg>
<svg style="left:728px;top:467.8px" width="16" height="13"><polygon points="1.85,0.3 13.9,0.3 8.6,11.6 6.0,11.6 7.3,4.7 4.4,3.7 1.85,1.3" fill="#f01010" stroke="#9a0808" stroke-width="0.7" stroke-linejoin="round"/><polygon points="0.2,9.8 2.3,5.2 3.3,5.2 4.6,9.8" fill="#f01010" stroke="#9a0808" stroke-width="0.7" stroke-linejoin="round"/></svg>
<div class="t" style="left:773px;top:467.86px;font-size:11px;color:#222;">US Non-Farm Employment Change</div>
<svg style="left:1216px;top:464px" width="18" height="18"><path d="M1.5 7.5 v-2.5 h4.5 l1 1 h7.5 v1.5" fill="#f4e2a0" stroke="#c9a040" stroke-width="1"/><rect x="1.5" y="8" width="13" height="7.5" fill="#f6dc7a" stroke="#c9a040" stroke-width="1"/><rect x="2.5" y="8.8" width="11" height="2.6" fill="#fff7d0"/><rect x="2.5" y="11.4" width="11" height="3.3" fill="#f2cf58"/><path d="M8.5 3.5 h4.5 l2.5 2.5 v6 h-7z" fill="#eaf2fc" stroke="#6a8ac0" stroke-width="0.9"/></svg>
<div class="t" style="left:1236.0px;width:300px;text-align:center;top:467.86px;font-size:11px;color:#222;">66K</div>
<div class="t" style="left:1322.0px;width:300px;text-align:center;top:467.86px;font-size:11px;color:#222;">64K</div>
<svg style="left:1539px;top:465px" width="17" height="15"><rect x="0.5" y="4.5" width="5" height="9" fill="#f07070" stroke="#b03030"/><rect x="5.5" y="0.5" width="5" height="13" fill="#70a8f0" stroke="#2050b0"/><rect x="10.5" y="7.5" width="5" height="6" fill="#80c880" stroke="#307030"/></svg>
<svg style="left:689px;top:496px" width="10" height="14"><path d="M1.8 2.3 q3.2 4.15 0 8.3" fill="none" stroke="#b6b6ba" stroke-width="2"/><path d="M4.9 0.6 q4.4 6 0 12" fill="none" stroke="#b6b6ba" stroke-width="2.2"/></svg>
<svg style="left:728px;top:496.8px" width="16" height="13"><polygon points="1.85,0.3 13.9,0.3 8.6,11.6 6.0,11.6 7.3,4.7 4.4,3.7 1.85,1.3" fill="#f01010" stroke="#9a0808" stroke-width="0.7" stroke-linejoin="round"/><polygon points="0.2,9.8 2.3,5.2 3.3,5.2 4.6,9.8" fill="#f01010" stroke="#9a0808" stroke-width="0.7" stroke-linejoin="round"/></svg>
<div class="t" style="left:773px;top:496.86px;font-size:11px;color:#222;">US Unemployment Rate</div>
<svg style="left:1216px;top:493px" width="18" height="18"><path d="M1.5 7.5 v-2.5 h4.5 l1 1 h7.5 v1.5" fill="#f4e2a0" stroke="#c9a040" stroke-width="1"/><rect x="1.5" y="8" width="13" height="7.5" fill="#f6dc7a" stroke="#c9a040" stroke-width="1"/><rect x="2.5" y="8.8" width="11" height="2.6" fill="#fff7d0"/><rect x="2.5" y="11.4" width="11" height="3.3" fill="#f2cf58"/></svg>
<div class="t" style="left:1236.0px;width:300px;text-align:center;top:496.86px;font-size:11px;color:#222;">4.5%</div>
<div class="t" style="left:1322.0px;width:300px;text-align:center;top:496.86px;font-size:11px;color:#222;">4.6%</div>
<svg style="left:1539px;top:494px" width="17" height="15"><rect x="0.5" y="4.5" width="5" height="9" fill="#f07070" stroke="#b03030"/><rect x="5.5" y="0.5" width="5" height="13" fill="#70a8f0" stroke="#2050b0"/><rect x="10.5" y="7.5" width="5" height="6" fill="#80c880" stroke="#307030"/></svg>
<svg style="left:689px;top:525px" width="10" height="14"><path d="M1.8 2.3 q3.2 4.15 0 8.3" fill="none" stroke="#b6b6ba" stroke-width="2"/><path d="M4.9 0.6 q4.4 6 0 12" fill="none" stroke="#b6b6ba" stroke-width="2.2"/></svg>
<svg style="left:728px;top:525.8px" width="16" height="13"><polygon points="1.85,0.3 13.9,0.3 8.6,11.6 6.0,11.6 7.3,4.7 4.4,3.7 1.85,1.3" fill="#f2dc10" stroke="#a89a10" stroke-width="0.7" stroke-linejoin="round"/><polygon points="0.2,9.8 2.3,5.2 3.3,5.2 4.6,9.8" fill="#f2dc10" stroke="#a89a10" stroke-width="0.7" stroke-linejoin="round"/></svg>
<div class="t" style="left:773px;top:525.86px;font-size:11px;color:#222;">US Building Permits</div>
<svg style="left:1216px;top:522px" width="18" height="18"><path d="M1.5 7.5 v-2.5 h4.5 l1 1 h7.5 v1.5" fill="#f4e2a0" stroke="#c9a040" stroke-width="1"/><rect x="1.5" y="8" width="13" height="7.5" fill="#f6dc7a" stroke="#c9a040" stroke-width="1"/><rect x="2.5" y="8.8" width="11" height="2.6" fill="#fff7d0"/><rect x="2.5" y="11.4" width="11" height="3.3" fill="#f2cf58"/><polygon points="11.20,0.20 12.55,3.34 15.96,3.65 13.39,5.91 14.14,9.25 11.20,7.50 8.26,9.25 9.01,5.91 6.44,3.65 9.85,3.34" fill="#f07a3a" stroke="#a83a18" stroke-width="0.8" stroke-linejoin="round"/></svg>
<div class="t" style="left:1236.0px;width:300px;text-align:center;top:525.86px;font-size:11px;color:#222;">1.35M</div>
<svg style="left:1539px;top:523px" width="17" height="15"><rect x="0.5" y="4.5" width="5" height="9" fill="#f07070" stroke="#b03030"/><rect x="5.5" y="0.5" width="5" height="13" fill="#70a8f0" stroke="#2050b0"/><rect x="10.5" y="7.5" width="5" height="6" fill="#80c880" stroke="#307030"/></svg>
<div class="t" style="left:484.0px;width:300px;text-align:center;top:554.86px;font-size:11px;color:#222;">10:00am</div>
<svg style="left:689px;top:554px" width="10" height="14"><path d="M1.8 2.3 q3.2 4.15 0 8.3" fill="none" stroke="#b6b6ba" stroke-width="2"/><path d="M4.9 0.6 q4.4 6 0 12" fill="none" stroke="#b6b6ba" stroke-width="2.2"/></svg>
<svg style="left:728px;top:554.8px" width="16" height="13"><polygon points="1.85,0.3 13.9,0.3 8.6,11.6 6.0,11.6 7.3,4.7 4.4,3.7 1.85,1.3" fill="#f5902a" stroke="#b8601a" stroke-width="0.7" stroke-linejoin="round"/><polygon points="0.2,9.8 2.3,5.2 3.3,5.2 4.6,9.8" fill="#f5902a" stroke="#b8601a" stroke-width="0.7" stroke-linejoin="round"/></svg>
<div class="t" style="left:773px;top:554.86px;font-size:11px;color:#222;">US Prelim UoM Consumer Sentiment</div>
<svg style="left:1216px;top:551px" width="18" height="18"><path d="M1.5 7.5 v-2.5 h4.5 l1 1 h7.5 v1.5" fill="#f4e2a0" stroke="#c9a040" stroke-width="1"/><rect x="1.5" y="8" width="13" height="7.5" fill="#f6dc7a" stroke="#c9a040" stroke-width="1"/><rect x="2.5" y="8.8" width="11" height="2.6" fill="#fff7d0"/><rect x="2.5" y="11.4" width="11" height="3.3" fill="#f2cf58"/></svg>
<div class="t" style="left:1236.0px;width:300px;text-align:center;top:554.86px;font-size:11px;color:#222;">53.5</div>
<div class="t" style="left:1318.5px;width:300px;text-align:center;top:554.86px;font-size:11px;color:#222;">52.9</div>
<svg style="left:1539px;top:552px" width="17" height="15"><rect x="0.5" y="4.5" width="5" height="9" fill="#f07070" stroke="#b03030"/><rect x="5.5" y="0.5" width="5" height="13" fill="#70a8f0" stroke="#2050b0"/><rect x="10.5" y="7.5" width="5" height="6" fill="#80c880" stroke="#307030"/></svg>
<svg style="left:689px;top:583px" width="10" height="14"><path d="M1.8 2.3 q3.2 4.15 0 8.3" fill="none" stroke="#b6b6ba" stroke-width="2"/><path d="M4.9 0.6 q4.4 6 0 12" fill="none" stroke="#b6b6ba" stroke-width="2.2"/></svg>
<svg style="left:728px;top:583.8px" width="16" height="13"><polygon points="1.85,0.3 13.9,0.3 8.6,11.6 6.0,11.6 7.3,4.7 4.4,3.7 1.85,1.3" fill="#f5902a" stroke="#b8601a" stroke-width="0.7" stroke-linejoin="round"/><polygon points="0.2,9.8 2.3,5.2 3.3,5.2 4.6,9.8" fill="#f5902a" stroke="#b8601a" stroke-width="0.7" stroke-linejoin="round"/></svg>
<div class="t" style="left:773px;top:583.86px;font-size:11px;color:#222;">US Prelim UoM Inflation Expectations</div>
<svg style="left:1216px;top:580px" width="18" height="18"><path d="M1.5 7.5 v-2.5 h4.5 l1 1 h7.5 v1.5" fill="#f4e2a0" stroke="#c9a040" stroke-width="1"/><rect x="1.5" y="8" width="13" height="7.5" fill="#f6dc7a" stroke="#c9a040" stroke-width="1"/><rect x="2.5" y="8.8" width="11" height="2.6" fill="#fff7d0"/><rect x="2.5" y="11.4" width="11" height="3.3" fill="#f2cf58"/></svg>
<div class="t" style="left:1318.5px;width:300px;text-align:center;top:583.86px;font-size:11px;color:#222;">4.2%</div>
<svg style="left:1539px;top:581px" width="17" height="15"><rect x="0.5" y="4.5" width="5" height="9" fill="#f07070" stroke="#b03030"/><rect x="5.5" y="0.5" width="5" height="13" fill="#70a8f0" stroke="#2050b0"/><rect x="10.5" y="7.5" width="5" height="6" fill="#80c880" stroke="#307030"/></svg>
<svg style="left:612px;top:325.5px" width="8" height="9"><polygon points="0.6,0.6 3.6,0.6 6.9,4 3.6,7.5 0.6,7.5" fill="#62c862" stroke="#2f8f2f" stroke-width="0.9" stroke-linejoin="round"/></svg>
<svg style="left:1481.5px;top:556px" width="6" height="9"><polygon points="5,0.5 5,8 0.5,4.2" fill="#eab020" stroke="#c08010" stroke-width="0.6"/></svg>
<svg style="left:1483px;top:585px" width="6" height="9"><polygon points="5,0.5 5,8 0.5,4.2" fill="#eab020" stroke="#c08010" stroke-width="0.6"/></svg>
<div class="t" style="left:524.5px;top:608.86px;font-size:11px;color:#3a536e;">More</div>
<svg style="left:514px;top:610px" width="9" height="12"><rect x="3" y="2" width="2.8" height="5" fill="#4a78b0"/><polygon points="0.8,6.2 8,6.2 4.4,10" fill="#4a78b0"/><rect x="1" y="10" width="6.8" height="1.2" fill="#4a78b0"/></svg>
<div class="b" style="left:505px;top:640px;width:530px;height:353px;background:#f3f3f6;box-shadow:0 1px 2px rgba(0,0,0,0.35);"></div>
<div class="b" style="left:505px;top:640px;width:530px;height:24px;background:linear-gradient(#634f7e,#55446e);"></div>
<div class="t" style="left:513px;top:644.86px;font-size:11px;font-weight:bold;color:#f2ecf9;">News / Latest Stories</div>
<div class="b" style="left:1007px;top:640px;width:28px;height:24px;background:linear-gradient(#75648f,#6f5e8b);"></div><svg style="left:1016px;top:645px" width="12" height="14"><path d="M1.6 2.8 q3 4.6 0 9.2" fill="none" stroke="#c2b4dc" stroke-width="1.9"/><path d="M5 1 q4.2 6 0 12" fill="none" stroke="#c2b4dc" stroke-width="2.1"/></svg>
<svg style="left:515px;top:676px" width="13" height="14" viewBox="0 0 13 14"><rect x="0.65" y="0.65" width="11.2" height="12.2" rx="1.2" fill="#f0f0f2" stroke="#7a7a7a" stroke-width="1.3"/><rect x="2.3" y="2.4" width="7.8" height="2.4" fill="#8a8a8a"/><rect x="2.3" y="6" width="5" height="1" fill="#9a9a9a"/><rect x="8.2" y="6" width="1.9" height="1" fill="#9a9a9a"/><rect x="2.3" y="8" width="5" height="1" fill="#9a9a9a"/><rect x="8.2" y="8" width="1.9" height="1" fill="#9a9a9a"/><rect x="2.3" y="10" width="2" height="1" fill="#9a9a9a"/><rect x="5.2" y="10" width="4.9" height="1" fill="#9a9a9a"/></svg>
<div class="t" style="left:530.6px;top:674.86px;font-size:11px;font-weight:bold;color:#33506e;"><u>Bitcoin Miners Shift From Crypto to AI Data Centers</u></div>
<div class="t" style="left:513px;top:693.86px;font-size:11px;color:#8a8a8a;"><u>From etftrends.com</u><span style="color:#bbb;margin:0 7px 0 7.2px">|</span>43 min ago</div>
<div class="b" style="left:505px;top:713px;width:530px;height:1px;background:#e4e4e8;"></div>
<svg style="left:515px;top:726px" width="13" height="14" viewBox="0 0 13 14"><rect x="0.65" y="0.65" width="11.2" height="12.2" rx="1.2" fill="#f0f0f2" stroke="#7a7a7a" stroke-width="1.3"/><rect x="2.3" y="2.4" width="7.8" height="2.4" fill="#8a8a8a"/><rect x="2.3" y="6" width="5" height="1" fill="#9a9a9a"/><rect x="8.2" y="6" width="1.9" height="1" fill="#9a9a9a"/><rect x="2.3" y="8" width="5" height="1" fill="#9a9a9a"/><rect x="8.2" y="8" width="1.9" height="1" fill="#9a9a9a"/><rect x="2.3" y="10" width="2" height="1" fill="#9a9a9a"/><rect x="5.2" y="10" width="4.9" height="1" fill="#9a9a9a"/></svg>
<div class="t" style="left:530.6px;top:724.86px;font-size:11px;font-weight:bold;color:#33506e;"><u>Xi Is Testing Japan’s Ties With Trump by Escalating Trade Battle</u></div>
<div class="t" style="left:513px;top:743.86px;font-size:11px;color:#8a8a8a;"><u>From finance.yahoo.com</u><span style="color:#bbb;margin:0 7px 0 7.2px">|</span>2 hr 1 min ago</div>
<div class="b" style="left:505px;top:763px;width:530px;height:1px;background:#e4e4e8;"></div>
<svg style="left:515px;top:776px" width="13" height="14" viewBox="0 0 13 14"><rect x="0.65" y="0.65" width="11.2" height="12.2" rx="1.2" fill="#f0f0f2" stroke="#7a7a7a" stroke-width="1.3"/><rect x="2.3" y="2.4" width="7.8" height="2.4" fill="#8a8a8a"/><rect x="2.3" y="6" width="5" height="1" fill="#9a9a9a"/><rect x="8.2" y="6" width="1.9" height="1" fill="#9a9a9a"/><rect x="2.3" y="8" width="5" height="1" fill="#9a9a9a"/><rect x="8.2" y="8" width="1.9" height="1" fill="#9a9a9a"/><rect x="2.3" y="10" width="2" height="1" fill="#9a9a9a"/><rect x="5.2" y="10" width="4.9" height="1" fill="#9a9a9a"/></svg>
<div class="t" style="left:530.6px;top:774.86px;font-size:11px;font-weight:bold;color:#33506e;"><u>Top Crypto Losers: Pump.fun, Story, and Pudgy Penguins test key support levels</u></div>
<div class="t" style="left:513px;top:793.86px;font-size:11px;color:#8a8a8a;"><u>From fxstreet.com</u><span style="color:#bbb;margin:0 7px 0 7.2px">|</span>3 hr ago</div>
<div class="b" style="left:505px;top:813px;width:530px;height:1px;background:#e4e4e8;"></div>
<svg style="left:515px;top:826px" width="13" height="14" viewBox="0 0 13 14"><rect x="0.65" y="0.65" width="11.2" height="12.2" rx="1.2" fill="#f0f0f2" stroke="#7a7a7a" stroke-width="1.3"/><rect x="2.3" y="2.4" width="7.8" height="2.4" fill="#8a8a8a"/><rect x="2.3" y="6" width="5" height="1" fill="#9a9a9a"/><rect x="8.2" y="6" width="1.9" height="1" fill="#9a9a9a"/><rect x="2.3" y="8" width="5" height="1" fill="#9a9a9a"/><rect x="8.2" y="8" width="1.9" height="1" fill="#9a9a9a"/><rect x="2.3" y="10" width="2" height="1" fill="#9a9a9a"/><rect x="5.2" y="10" width="4.9" height="1" fill="#9a9a9a"/></svg>
<div class="t" style="left:530.6px;top:824.86px;font-size:11px;font-weight:bold;color:#33506e;"><u>Litecoin price prediction: More downside likely as LTC stays below key MA-200 level</u></div>
<div class="t" style="left:513px;top:843.86px;font-size:11px;color:#8a8a8a;"><u>From tradersunion.com</u><span style="color:#bbb;margin:0 7px 0 7.2px">|</span>4 hr ago</div>
<div class="b" style="left:505px;top:863px;width:530px;height:1px;background:#e4e4e8;"></div>
<svg style="left:515px;top:876px" width="13" height="14" viewBox="0 0 13 14"><rect x="0.65" y="0.65" width="11.2" height="12.2" rx="1.2" fill="#f0f0f2" stroke="#7a7a7a" stroke-width="1.3"/><rect x="2.3" y="2.4" width="7.8" height="2.4" fill="#8a8a8a"/><rect x="2.3" y="6" width="5" height="1" fill="#9a9a9a"/><rect x="8.2" y="6" width="1.9" height="1" fill="#9a9a9a"/><rect x="2.3" y="8" width="5" height="1" fill="#9a9a9a"/><rect x="8.2" y="8" width="1.9" height="1" fill="#9a9a9a"/><rect x="2.3" y="10" width="2" height="1" fill="#9a9a9a"/><rect x="5.2" y="10" width="4.9" height="1" fill="#9a9a9a"/></svg>
<div class="t" style="left:530.6px;top:874.86px;font-size:11px;font-weight:bold;color:#33506e;"><u>ISM Services: Resilient Expansion with Somewhat Overstated Strength</u></div>
<div class="t" style="left:513px;top:893.86px;font-size:11px;color:#8a8a8a;"><u>From wellsfargo.bluematrix.com</u><span style="color:#bbb;margin:0 7px 0 7.2px">|</span>4 hr ago</div>
<div class="b" style="left:505px;top:913px;width:530px;height:1px;background:#e4e4e8;"></div>
<svg style="left:515px;top:926px" width="13" height="14" viewBox="0 0 13 14"><rect x="0.65" y="0.65" width="11.2" height="12.2" rx="1.2" fill="#f0f0f2" stroke="#7a7a7a" stroke-width="1.3"/><rect x="2.3" y="2.4" width="7.8" height="2.4" fill="#8a8a8a"/><rect x="2.3" y="6" width="5" height="1" fill="#9a9a9a"/><rect x="8.2" y="6" width="1.9" height="1" fill="#9a9a9a"/><rect x="2.3" y="8" width="5" height="1" fill="#9a9a9a"/><rect x="8.2" y="8" width="1.9" height="1" fill="#9a9a9a"/><rect x="2.3" y="10" width="2" height="1" fill="#9a9a9a"/><rect x="5.2" y="10" width="4.9" height="1" fill="#9a9a9a"/></svg>
<div class="t" style="left:530.6px;top:924.86px;font-size:11px;font-weight:bold;color:#33506e;"><u>Rumble and Tether Launch Built-In Crypto Wallet for Creator Tips</u></div>
<div class="t" style="left:513px;top:943.86px;font-size:11px;color:#8a8a8a;"><u>From financefeeds.com</u><span style="color:#bbb;margin:0 7px 0 7.2px">|</span>5 hr ago</div>
<div class="b" style="left:505px;top:963px;width:530px;height:1px;background:#e4e4e8;"></div>
<svg style="left:515px;top:976px" width="13" height="14" viewBox="0 0 13 14"><rect x="0.65" y="0.65" width="11.2" height="12.2" rx="1.2" fill="#f0f0f2" stroke="#7a7a7a" stroke-width="1.3"/><rect x="2.3" y="2.4" width="7.8" height="2.4" fill="#8a8a8a"/><rect x="2.3" y="6" width="5" height="1" fill="#9a9a9a"/><rect x="8.2" y="6" width="1.9" height="1" fill="#9a9a9a"/><rect x="2.3" y="8" width="5" height="1" fill="#9a9a9a"/><rect x="8.2" y="8" width="1.9" height="1" fill="#9a9a9a"/><rect x="2.3" y="10" width="2" height="1" fill="#9a9a9a"/><rect x="5.2" y="10" width="4.9" height="1" fill="#9a9a9a"/></svg>
<div class="t" style="left:530.6px;top:974.86px;font-size:11px;font-weight:bold;color:#33506e;"><u>Mexico Ethereum Ecosystem Overview</u></div>
<div class="t" style="left:513px;top:993.86px;font-size:11px;color:#8a8a8a;"><u>From x.com</u><span style="color:#bbb;margin:0 7px 0 7.2px">|</span>6 hr ago</div>
<div class="b" style="left:505px;top:1013px;width:530px;height:1px;background:#e4e4e8;"></div>
<div class="b" style="left:1050px;top:640px;width:530px;height:353px;background:#f3f3f6;box-shadow:0 1px 2px rgba(0,0,0,0.35);"></div>
<div class="b" style="left:1050px;top:640px;width:530px;height:24px;background:linear-gradient(#634f7e,#55446e);"></div>
<div class="t" style="left:1058px;top:644.86px;font-size:11px;font-weight:bold;color:#f2ecf9;">News / Hot Stories</div>
<div class="b" style="left:1552px;top:640px;width:28px;height:24px;background:linear-gradient(#75648f,#6f5e8b);"></div><svg style="left:1561px;top:645px" width="12" height="14"><path d="M1.6 2.8 q3 4.6 0 9.2" fill="none" stroke="#c2b4dc" stroke-width="1.9"/><path d="M5 1 q4.2 6 0 12" fill="none" stroke="#c2b4dc" stroke-width="2.1"/></svg>
<svg style="left:1060px;top:677.8px" width="13" height="14" viewBox="0 0 13 14"><rect x="0.65" y="0.65" width="11.2" height="12.2" rx="1.2" fill="#f0f0f2" stroke="#7a7a7a" stroke-width="1.3"/><rect x="2.3" y="2.4" width="7.8" height="2.4" fill="#8a8a8a"/><rect x="2.3" y="6" width="5" height="1" fill="#9a9a9a"/><rect x="8.2" y="6" width="1.9" height="1" fill="#9a9a9a"/><rect x="2.3" y="8" width="5" height="1" fill="#9a9a9a"/><rect x="8.2" y="8" width="1.9" height="1" fill="#9a9a9a"/><rect x="2.3" y="10" width="2" height="1" fill="#9a9a9a"/><rect x="5.2" y="10" width="4.9" height="1" fill="#9a9a9a"/></svg>
<div class="t" style="left:1075.5px;top:672.29px;font-size:19px;color:#33506e;letter-spacing:0;"><u>Xi Is Testing Japan’s Ties With Trump by Escalating Trade</u></div>
<div class="t" style="left:1075.5px;top:696.29px;font-size:19px;color:#33506e;letter-spacing:0;"><u>Battle</u></div>
<div class="b" style="left:1060px;top:723.8px;width:124px;height:123px;background:#d9d8dc;"></div>
<div class="b" style="left:1066px;top:730.3px;width:112px;height:111px;background:#fff;"></div>
<svg style="left:1067px;top:731.3px" width="110" height="110" viewBox="0 0 110 110"><defs><linearGradient id="bg1" x1="0" y1="0" x2="0" y2="1"><stop offset="0" stop-color="#ddd5cc"/><stop offset="0.1" stop-color="#cfc6bb"/><stop offset="0.2" stop-color="#757a72"/><stop offset="0.55" stop-color="#5f6a5d"/><stop offset="1" stop-color="#59625a"/></linearGradient></defs>
<rect width="110" height="110" fill="url(#bg1)"/>
<path d="M0 12 Q55 10 110 22 L110 32 Q55 20 0 22z" fill="#8f8d86" opacity="0.7"/>
<rect x="62" y="70" width="48" height="8" fill="#88908a" opacity="0.45"/>
<path d="M0 50 L12 46 L30 48 L50 50 L64 56 L70 70 L70 110 L0 110z" fill="#2b3566"/>
<path d="M8 40 L22 34 L30 40 L26 50 L14 58 L6 54z" fill="#e4b7a0"/>
<path d="M0 50 L8 46 L14 60 L10 82 L0 84z" fill="#28305c"/>
<path d="M29 50 L47 50 L46 78 L38 92 L31 78z" fill="#f1f1f4"/>
<path d="M36 54 L42 54 L45 92 L40 100 L35 92z" fill="#d41f2c"/>
<ellipse cx="42" cy="46" rx="10" ry="12" fill="#dfae94"/>
<path d="M28 33 Q28 19 40 18 Q52 18 52 32 L52 38 L27 38z" fill="#f6f6f6"/>
<rect x="33" y="25" width="14" height="4" fill="#2a2a48" opacity="0.8"/>
<path d="M69 82 L80 75 L100 75 L110 80 L110 110 L69 110z" fill="#1c1c26"/>
<path d="M82 84 L98 84 L98 110 L84 110z" fill="#f0f0f2"/>
<ellipse cx="90" cy="63" rx="9.5" ry="12" fill="#e2b69c"/>
<path d="M78 62 Q78 45 90 45 Q103 45 103 62 L101 70 Q99 54 90 52 Q81 54 80 70z" fill="#231b1b"/>
<circle cx="106" cy="96" r="1.5" fill="#c03030"/></svg>
<div class="t" style="left:1189px;top:723.06px;font-size:11px;color:#8a8a8a;"><u>From finance.yahoo.com</u><span style="color:#bbb;margin:0 7px 0 7.2px">|</span>2 hr 1 min ago</div>
<div class="t" style="left:1189px;top:741.94px;font-size:12px;color:#222;letter-spacing:0.14px;">China is testing Donald Trump’s support for America’s top ally in Asia</div>
<div class="t" style="left:1189px;top:757.94px;font-size:12px;color:#222;letter-spacing:0.14px;">by imposing export controls on Japan months after the US leader</div>
<div class="t" style="left:1189px;top:773.94px;font-size:12px;color:#222;letter-spacing:0.14px;">boasted he’d settled the rare earth issue “for the world.” Beijing</div>
<div class="t" style="left:1189px;top:789.94px;font-size:12px;color:#222;letter-spacing:0.14px;">turned up the heat on Tokyo this week by banning all dual-use</div>
<div class="t" style="left:1189px;top:805.94px;font-size:12px;color:#222;letter-spacing:0.14px;">shipments for military use — potentially targeting an estimated 40%</div>
<div class="t" style="left:1189px;top:821.94px;font-size:12px;color:#222;letter-spacing:0.14px;">of Chinese exports to its ...</div>
<div class="b" style="left:1050px;top:856px;width:520px;height:1px;background:linear-gradient(90deg,#e4e4e8 0%,#e4e4e8 70%,rgba(228,228,232,0) 100%);"></div>
<svg style="left:1060px;top:870.3px" width="13" height="14" viewBox="0 0 13 14"><rect x="0.65" y="0.65" width="11.2" height="12.2" rx="1.2" fill="#f0f0f2" stroke="#7a7a7a" stroke-width="1.3"/><rect x="2.3" y="2.4" width="7.8" height="2.4" fill="#8a8a8a"/><rect x="2.3" y="6" width="5" height="1" fill="#9a9a9a"/><rect x="8.2" y="6" width="1.9" height="1" fill="#9a9a9a"/><rect x="2.3" y="8" width="5" height="1" fill="#9a9a9a"/><rect x="8.2" y="8" width="1.9" height="1" fill="#9a9a9a"/><rect x="2.3" y="10" width="2" height="1" fill="#9a9a9a"/><rect x="5.2" y="10" width="4.9" height="1" fill="#9a9a9a"/></svg>
<div class="t" style="left:1075.5px;top:864.79px;font-size:19px;color:#33506e;letter-spacing:0;"><u>Alleged Crypto Scam Kingpin Arrested in Cambodia After</u></div>
<div class="t" style="left:1075.5px;top:888.79px;font-size:19px;color:#33506e;letter-spacing:0;"><u>$12 Billion Bitcoin Seizure</u></div>
<div class="b" style="left:1060px;top:916.3px;width:124px;height:123px;background:#d9d8dc;"></div>
<div class="b" style="left:1066px;top:922.8px;width:112px;height:111px;background:#fff;"></div>
<svg style="left:1067px;top:923.8px" width="110" height="110" viewBox="0 0 110 110"><defs><radialGradient id="hands" cx="0.5" cy="0.5" r="0.5"><stop offset="0" stop-color="#cfcfcf"/><stop offset="0.55" stop-color="#8c8c8c"/><stop offset="1" stop-color="#3a3a3a" stop-opacity="0"/></radialGradient>
<linearGradient id="org" x1="0" y1="0" x2="0" y2="1"><stop offset="0" stop-color="#e27a52"/><stop offset="0.6" stop-color="#c8706a"/><stop offset="1" stop-color="#a66a88"/></linearGradient>
<linearGradient id="fold" x1="0" y1="0" x2="1" y2="0"><stop offset="0" stop-color="#0a0a0a"/><stop offset="0.5" stop-color="#2e2e2e"/><stop offset="1" stop-color="#0a0a0a"/></linearGradient></defs>
<rect width="110" height="110" fill="#0b0b0b"/>
<rect x="50" y="0" width="16" height="34" fill="url(#fold)"/>
<rect x="68" y="0" width="12" height="30" fill="url(#fold)"/>
<line x1="21" y1="11" x2="42" y2="36" stroke="#5a5a5a" stroke-width="2"/>
<line x1="90" y1="11" x2="110" y2="17" stroke="#4a4a4a" stroke-width="1.5"/>
<ellipse cx="60" cy="56" rx="30" ry="22" fill="url(#hands)"/>
<ellipse cx="66" cy="54" rx="14" ry="12" fill="#b8b8b8" opacity="0.6"/>
<path d="M42 36 L82 34 L84 40 L44 42z" fill="#6e6e6e"/>
<path d="M72 30 L92 28 L94 50 L78 52z" fill="#141414"/>
<path d="M91 42 L110 31 L110 110 L91 110z" fill="url(#org)"/></svg>
<div class="t" style="left:1189px;top:915.56px;font-size:11px;color:#8a8a8a;"><u>From decrypt.co</u><span style="color:#bbb;margin:0 7px 0 7.2px">|</span>8 hr ago</div>
<div class="t" style="left:1189px;top:935.24px;font-size:12px;color:#222;letter-spacing:0.14px;">The alleged mastermind of a scam ring that stole billions of dollars’</div>
<div class="t" style="left:1189px;top:951.24px;font-size:12px;color:#222;letter-spacing:0.14px;">worth of assets from individuals in the U.S. and across the globe was</div>
<div class="t" style="left:1189px;top:967.24px;font-size:12px;color:#222;letter-spacing:0.14px;">arrested Tuesday in Cambodia and extradited to China, according to</div>
<div class="t" style="left:1189px;top:983.24px;font-size:12px;color:#222;letter-spacing:0.14px;">a Wall Street Journal report. Chen Zhi, a Cambodian national and the</div>
</div></body></html>
